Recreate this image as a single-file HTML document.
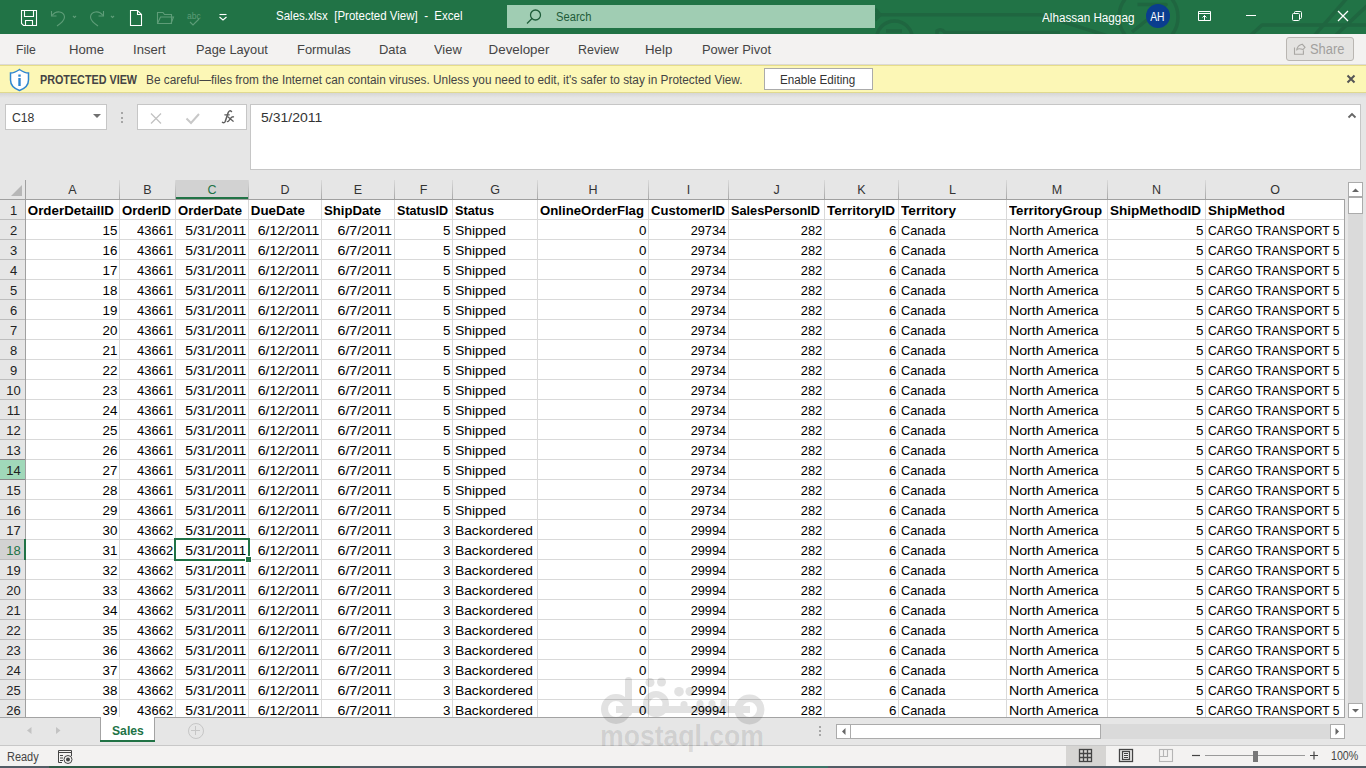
<!DOCTYPE html>
<html><head><meta charset="utf-8"><title>Sales.xlsx - Excel</title>
<style>html,body{margin:0;padding:0;width:1366px;height:768px;overflow:hidden;background:#fff;font-family:'Liberation Sans', sans-serif;}</style>
</head><body>
<div style="position:absolute;left:0px;top:0px;width:1366px;height:34px;background:#217346;z-index:1"></div><svg style="position:absolute;left:0;top:0;z-index:2" width="1366" height="34">
<g stroke="#1f6640" stroke-width="3.5" fill="none" stroke-linejoin="round">
<path d="M873 14.7 L1040 14.7 L1108 36"/>
<path d="M875 9 L880 14.7 L875 20"/>
<circle cx="894.5" cy="39" r="18"/>
<path d="M886 31 H902"/>
<path d="M937 36 V31 Q941 28 945 32.5 L1060 32.5"/>
<circle cx="1148.5" cy="17" r="29.5"/>
<path d="M1137.5 4.6 H1166 L1132 32"/>
<path d="M1250 36 L1262 25 H1370"/>
<path d="M1347 -2 L1314 36"/>
<path d="M1370 3 L1335 36"/>
</g></svg><div style="position:absolute;left:507px;top:5px;width:368px;height:23px;background:#a0cdb3;z-index:3"></div><svg style="position:absolute;left:524px;top:8px;z-index:4" width="20" height="18"><g stroke="#1e5c39" stroke-width="1.3" fill="none"><circle cx="11.5" cy="7" r="5"/><path d="M8 10.5 L3 15.5"/></g></svg><div style="position:absolute;left:1146px;top:4px;width:24px;height:24px;border-radius:50%;background:#0a3d8f;z-index:4"></div><svg style="position:absolute;left:0;top:0;z-index:4" width="260" height="34">
<g fill="none" stroke="#ffffff" stroke-width="1.1">
<path d="M21.5 10.5 H36.5 V25.5 H23.5 L21.5 23.5 Z"/>
<path d="M24.5 10.5 V16.5 H33.5 V10.5"/>
<path d="M25.5 25.5 V20.5 H32.5 V25.5"/>
<path d="M130.5 10.5 H137.5 L141.5 14.5 V25.5 H130.5 Z"/>
<path d="M137.5 10.5 V14.5 H141.5"/>
<path d="M219.5 14.5 H226.5"/>
<path d="M219.5 17 L223 20 L226.5 17"/>
</g>
<g fill="none" stroke="#5e9d78" stroke-width="1.1">
<path d="M51.5 11 V16 H56.5"/><path d="M52 15.5 C56 10 64 11 64.5 17 C64.5 21 60 24 57 26"/>
<path d="M73 16 L74.5 17.5 L76 16"/>
<path d="M103.5 11 V16 H98.5"/><path d="M103 15.5 C99 10 91 11 90.5 17 C90.5 21 95 24 98 26"/>
<path d="M111 16 L112.5 17.5 L114 16"/>
<path d="M157.5 12.5 H163 L164.5 14.5 H171.5 V23.5 H157.5 Z"/><path d="M157.5 23.5 L160.5 17 H173.5 L171 23.5"/>
<path d="M190 22 L193 25 L199 19"/>
</g>
<text x="187" y="19" font-family="Liberation Sans" font-size="8.5" fill="#5e9d78">abc</text>
</svg><svg style="position:absolute;left:1190px;top:0;z-index:4" width="176" height="34">
<g fill="none" stroke="#ffffff" stroke-width="1">
<path d="M8.5 11.5 H20.5 V20.5 H8.5 Z"/><path d="M8.5 13.5 H20.5"/><path d="M14.5 20.5 V15.5"/><path d="M12.5 17.5 L14.5 15.5 L16.5 17.5"/>
<path d="M56 15.5 H66"/>
<rect x="102.5" y="13.5" width="7" height="7" rx="1"/><path d="M104.5 13 V12.5 Q104.5 11.5 105.5 11.5 H110.5 Q111.5 11.5 111.5 12.5 V17.5 Q111.5 18.5 110.5 18.5 H110"/>
<path d="M148 11 L158 21 M158 11 L148 21" stroke-width="1.25"/>
</g></svg><div style="position:absolute;left:0px;top:34px;width:1366px;height:30px;background:#f3f2f1;z-index:1"></div><div style="position:absolute;left:0px;top:64px;width:1366px;height:1px;background:#dcdad6;z-index:2"></div><div style="position:absolute;left:1286px;top:37px;width:66px;height:22px;border:1px solid #b9b6b2;border-radius:3px;background:#e4e3e1;z-index:3"></div><svg style="position:absolute;left:1290px;top:40px;z-index:4" width="20" height="18"><g fill="none" stroke="#a8a6a3" stroke-width="1.1"><path d="M4.5 7.5 V14.3 H13.4 V10.3"/><path d="M6.6 10.5 Q7.5 5 12.2 4.2 L15 7.3 L13 9.6"/><path d="M6.8 9.2 Q9.5 8 13 9.6"/></g></svg><div style="position:absolute;left:0px;top:65px;width:1366px;height:28px;background:#fcf7b6;z-index:1"></div><div style="position:absolute;left:0px;top:65px;width:1366px;height:1px;background:#e6dd8a;z-index:2"></div><div style="position:absolute;left:0px;top:92px;width:1366px;height:1px;background:#e0d98f;z-index:2"></div><div style="position:absolute;left:0px;top:93px;width:1366px;height:5px;background:linear-gradient(#d6d6d6,#e6e6e6);z-index:2"></div><svg style="position:absolute;left:8px;top:67px;z-index:4" width="24" height="26"><path d="M11.5 2.5 C8 5 5 6 2.5 6 V13 C2.5 18 6 21.5 11.5 23.5 C17 21.5 20.5 18 20.5 13 V6 C18 6 15 5 11.5 2.5 Z" fill="#ffffff" stroke="#2f86d0" stroke-width="1.5"/><rect x="10.3" y="11" width="2.4" height="8" fill="#2f86d0"/><rect x="10.3" y="7.5" width="2.4" height="2.2" fill="#2f86d0"/></svg><div style="position:absolute;left:764px;top:68px;width:107px;height:20px;border:1px solid #ababab;background:#ffffff;z-index:3"></div><svg style="position:absolute;left:1344px;top:72px;z-index:4" width="14" height="14"><path d="M3.5 3.5 L10.5 10.5 M10.5 3.5 L3.5 10.5" stroke="#555" stroke-width="2"/></svg><div style="position:absolute;left:0px;top:96px;width:1366px;height:84px;background:#e6e6e6;z-index:1"></div><div style="position:absolute;left:5px;top:104px;width:100px;height:24px;border:1px solid #c6c6c6;background:#fff;z-index:3"></div><svg style="position:absolute;left:90px;top:110px;z-index:4" width="14" height="12"><path d="M3 4 H11 L7 8 Z" fill="#707070"/></svg><div style="position:absolute;left:121px;top:112px;width:2px;height:2px;background:#a6a6a6;z-index:3"></div><div style="position:absolute;left:121px;top:117px;width:2px;height:2px;background:#a6a6a6;z-index:3"></div><div style="position:absolute;left:121px;top:121px;width:2px;height:2px;background:#a6a6a6;z-index:3"></div><div style="position:absolute;left:137px;top:104px;width:108px;height:24px;border:1px solid #c6c6c6;background:#fff;z-index:3"></div><svg style="position:absolute;left:137px;top:104px;z-index:4" width="110" height="26">
<path d="M14 9.5 L24 19.5 M24 9.5 L14 19.5" stroke="#c2c2c2" stroke-width="1.3" fill="none"/>
<path d="M49.5 14.5 L54 19 L62 10" stroke="#c8c8c8" stroke-width="2" fill="none"/>
<g fill="none" stroke="#5f5f5f" stroke-width="1.5" stroke-linecap="round"><path d="M94.5 7.5 Q92.5 5.8 91.2 8.5 L88.2 17.5 Q87.3 19.3 85.5 18.3"/><path d="M87.8 10.8 H92.3" stroke-width="1.2"/><path d="M90.8 12.8 L96.2 17.2 M96.5 12.8 Q95 12.5 93.5 14.5 L91.5 17.2 Q91 17.8 90.3 17.5" stroke-width="1.3"/></g>
</svg><div style="position:absolute;left:250px;top:104px;width:1109px;height:64px;border:1px solid #c6c6c6;background:#fff;z-index:3"></div><svg style="position:absolute;left:1345px;top:110px;z-index:4" width="14" height="10"><path d="M3.5 7.5 L7 4 L10.5 7.5" stroke="#666" stroke-width="1.8" fill="none"/></svg><div style="position:absolute;left:26px;top:200px;width:1318px;height:517px;background:#ffffff;z-index:1"></div><div style="position:absolute;left:0px;top:180px;width:1366px;height:20px;background:#e6e6e6;z-index:1"></div><div style="position:absolute;left:176px;top:180px;width:72px;height:19px;background:#d2d2d2;z-index:2"></div><div style="position:absolute;left:176px;top:197px;width:72px;height:2px;background:#217346;z-index:3"></div><div style="position:absolute;left:0px;top:200px;width:25px;height:517px;background:#e6e6e6;z-index:1"></div><div style="position:absolute;left:0px;top:199px;width:1344px;height:1px;background:#a0a0a0;z-index:2"></div><div style="position:absolute;left:25px;top:180px;width:1px;height:537px;background:#a0a0a0;z-index:2"></div><div style="position:absolute;left:119px;top:180px;width:1px;height:19px;background:linear-gradient(#dadada,#a8a8a8);z-index:2"></div><div style="position:absolute;left:175px;top:180px;width:1px;height:19px;background:linear-gradient(#dadada,#a8a8a8);z-index:2"></div><div style="position:absolute;left:248px;top:180px;width:1px;height:19px;background:linear-gradient(#dadada,#a8a8a8);z-index:2"></div><div style="position:absolute;left:321px;top:180px;width:1px;height:19px;background:linear-gradient(#dadada,#a8a8a8);z-index:2"></div><div style="position:absolute;left:394px;top:180px;width:1px;height:19px;background:linear-gradient(#dadada,#a8a8a8);z-index:2"></div><div style="position:absolute;left:452px;top:180px;width:1px;height:19px;background:linear-gradient(#dadada,#a8a8a8);z-index:2"></div><div style="position:absolute;left:537px;top:180px;width:1px;height:19px;background:linear-gradient(#dadada,#a8a8a8);z-index:2"></div><div style="position:absolute;left:648px;top:180px;width:1px;height:19px;background:linear-gradient(#dadada,#a8a8a8);z-index:2"></div><div style="position:absolute;left:728px;top:180px;width:1px;height:19px;background:linear-gradient(#dadada,#a8a8a8);z-index:2"></div><div style="position:absolute;left:824px;top:180px;width:1px;height:19px;background:linear-gradient(#dadada,#a8a8a8);z-index:2"></div><div style="position:absolute;left:898px;top:180px;width:1px;height:19px;background:linear-gradient(#dadada,#a8a8a8);z-index:2"></div><div style="position:absolute;left:1006px;top:180px;width:1px;height:19px;background:linear-gradient(#dadada,#a8a8a8);z-index:2"></div><div style="position:absolute;left:1107px;top:180px;width:1px;height:19px;background:linear-gradient(#dadada,#a8a8a8);z-index:2"></div><div style="position:absolute;left:1205px;top:180px;width:1px;height:19px;background:linear-gradient(#dadada,#a8a8a8);z-index:2"></div><div style="position:absolute;left:119px;top:200px;width:1px;height:517px;background:#d9d9d9;z-index:2"></div><div style="position:absolute;left:175px;top:200px;width:1px;height:517px;background:#d9d9d9;z-index:2"></div><div style="position:absolute;left:248px;top:200px;width:1px;height:517px;background:#d9d9d9;z-index:2"></div><div style="position:absolute;left:321px;top:200px;width:1px;height:517px;background:#d9d9d9;z-index:2"></div><div style="position:absolute;left:394px;top:200px;width:1px;height:517px;background:#d9d9d9;z-index:2"></div><div style="position:absolute;left:452px;top:200px;width:1px;height:517px;background:#d9d9d9;z-index:2"></div><div style="position:absolute;left:537px;top:200px;width:1px;height:517px;background:#d9d9d9;z-index:2"></div><div style="position:absolute;left:648px;top:200px;width:1px;height:517px;background:#d9d9d9;z-index:2"></div><div style="position:absolute;left:728px;top:200px;width:1px;height:517px;background:#d9d9d9;z-index:2"></div><div style="position:absolute;left:824px;top:200px;width:1px;height:517px;background:#d9d9d9;z-index:2"></div><div style="position:absolute;left:898px;top:200px;width:1px;height:517px;background:#d9d9d9;z-index:2"></div><div style="position:absolute;left:1006px;top:200px;width:1px;height:517px;background:#d9d9d9;z-index:2"></div><div style="position:absolute;left:1107px;top:200px;width:1px;height:517px;background:#d9d9d9;z-index:2"></div><div style="position:absolute;left:1205px;top:200px;width:1px;height:517px;background:#d9d9d9;z-index:2"></div><div style="position:absolute;left:26px;top:219px;width:1318px;height:1px;background:#d9d9d9;z-index:2"></div><div style="position:absolute;left:0px;top:219px;width:25px;height:1px;background:#bdbdbd;z-index:2"></div><div style="position:absolute;left:26px;top:239px;width:1318px;height:1px;background:#d9d9d9;z-index:2"></div><div style="position:absolute;left:0px;top:239px;width:25px;height:1px;background:#bdbdbd;z-index:2"></div><div style="position:absolute;left:26px;top:259px;width:1318px;height:1px;background:#d9d9d9;z-index:2"></div><div style="position:absolute;left:0px;top:259px;width:25px;height:1px;background:#bdbdbd;z-index:2"></div><div style="position:absolute;left:26px;top:279px;width:1318px;height:1px;background:#d9d9d9;z-index:2"></div><div style="position:absolute;left:0px;top:279px;width:25px;height:1px;background:#bdbdbd;z-index:2"></div><div style="position:absolute;left:26px;top:299px;width:1318px;height:1px;background:#d9d9d9;z-index:2"></div><div style="position:absolute;left:0px;top:299px;width:25px;height:1px;background:#bdbdbd;z-index:2"></div><div style="position:absolute;left:26px;top:319px;width:1318px;height:1px;background:#d9d9d9;z-index:2"></div><div style="position:absolute;left:0px;top:319px;width:25px;height:1px;background:#bdbdbd;z-index:2"></div><div style="position:absolute;left:26px;top:339px;width:1318px;height:1px;background:#d9d9d9;z-index:2"></div><div style="position:absolute;left:0px;top:339px;width:25px;height:1px;background:#bdbdbd;z-index:2"></div><div style="position:absolute;left:26px;top:359px;width:1318px;height:1px;background:#d9d9d9;z-index:2"></div><div style="position:absolute;left:0px;top:359px;width:25px;height:1px;background:#bdbdbd;z-index:2"></div><div style="position:absolute;left:26px;top:379px;width:1318px;height:1px;background:#d9d9d9;z-index:2"></div><div style="position:absolute;left:0px;top:379px;width:25px;height:1px;background:#bdbdbd;z-index:2"></div><div style="position:absolute;left:26px;top:399px;width:1318px;height:1px;background:#d9d9d9;z-index:2"></div><div style="position:absolute;left:0px;top:399px;width:25px;height:1px;background:#bdbdbd;z-index:2"></div><div style="position:absolute;left:26px;top:419px;width:1318px;height:1px;background:#d9d9d9;z-index:2"></div><div style="position:absolute;left:0px;top:419px;width:25px;height:1px;background:#bdbdbd;z-index:2"></div><div style="position:absolute;left:26px;top:439px;width:1318px;height:1px;background:#d9d9d9;z-index:2"></div><div style="position:absolute;left:0px;top:439px;width:25px;height:1px;background:#bdbdbd;z-index:2"></div><div style="position:absolute;left:26px;top:459px;width:1318px;height:1px;background:#d9d9d9;z-index:2"></div><div style="position:absolute;left:0px;top:459px;width:25px;height:1px;background:#bdbdbd;z-index:2"></div><div style="position:absolute;left:26px;top:479px;width:1318px;height:1px;background:#d9d9d9;z-index:2"></div><div style="position:absolute;left:0px;top:479px;width:25px;height:1px;background:#bdbdbd;z-index:2"></div><div style="position:absolute;left:26px;top:499px;width:1318px;height:1px;background:#d9d9d9;z-index:2"></div><div style="position:absolute;left:0px;top:499px;width:25px;height:1px;background:#bdbdbd;z-index:2"></div><div style="position:absolute;left:26px;top:519px;width:1318px;height:1px;background:#d9d9d9;z-index:2"></div><div style="position:absolute;left:0px;top:519px;width:25px;height:1px;background:#bdbdbd;z-index:2"></div><div style="position:absolute;left:26px;top:539px;width:1318px;height:1px;background:#d9d9d9;z-index:2"></div><div style="position:absolute;left:0px;top:539px;width:25px;height:1px;background:#bdbdbd;z-index:2"></div><div style="position:absolute;left:26px;top:559px;width:1318px;height:1px;background:#d9d9d9;z-index:2"></div><div style="position:absolute;left:0px;top:559px;width:25px;height:1px;background:#bdbdbd;z-index:2"></div><div style="position:absolute;left:26px;top:579px;width:1318px;height:1px;background:#d9d9d9;z-index:2"></div><div style="position:absolute;left:0px;top:579px;width:25px;height:1px;background:#bdbdbd;z-index:2"></div><div style="position:absolute;left:26px;top:599px;width:1318px;height:1px;background:#d9d9d9;z-index:2"></div><div style="position:absolute;left:0px;top:599px;width:25px;height:1px;background:#bdbdbd;z-index:2"></div><div style="position:absolute;left:26px;top:619px;width:1318px;height:1px;background:#d9d9d9;z-index:2"></div><div style="position:absolute;left:0px;top:619px;width:25px;height:1px;background:#bdbdbd;z-index:2"></div><div style="position:absolute;left:26px;top:639px;width:1318px;height:1px;background:#d9d9d9;z-index:2"></div><div style="position:absolute;left:0px;top:639px;width:25px;height:1px;background:#bdbdbd;z-index:2"></div><div style="position:absolute;left:26px;top:659px;width:1318px;height:1px;background:#d9d9d9;z-index:2"></div><div style="position:absolute;left:0px;top:659px;width:25px;height:1px;background:#bdbdbd;z-index:2"></div><div style="position:absolute;left:26px;top:679px;width:1318px;height:1px;background:#d9d9d9;z-index:2"></div><div style="position:absolute;left:0px;top:679px;width:25px;height:1px;background:#bdbdbd;z-index:2"></div><div style="position:absolute;left:26px;top:699px;width:1318px;height:1px;background:#d9d9d9;z-index:2"></div><div style="position:absolute;left:0px;top:699px;width:25px;height:1px;background:#bdbdbd;z-index:2"></div><div style="position:absolute;left:1344px;top:199px;width:1px;height:519px;background:#a3a3a3;z-index:3"></div><div style="position:absolute;left:0px;top:717px;width:1345px;height:1px;background:#a3a3a3;z-index:3"></div><svg style="position:absolute;left:0;top:180px;z-index:3" width="25" height="19"><path d="M22 5 V16 H11 Z" fill="#b7b7b7"/></svg><div style="position:absolute;left:0px;top:460px;width:25px;height:19px;background:#a0d8b9;z-index:3"></div><div style="position:absolute;left:0px;top:459px;width:25px;height:1px;background:#8a8a8a;z-index:3"></div><div style="position:absolute;left:0px;top:479px;width:25px;height:1px;background:#8a8a8a;z-index:3"></div><div style="position:absolute;left:0px;top:540px;width:24px;height:19px;background:#d2d2d2;z-index:3"></div><div style="position:absolute;left:24px;top:539px;width:2px;height:21px;background:#217346;z-index:4"></div><div style="position:absolute;left:174px;top:538px;width:72px;height:19px;border:2px solid #217346;z-index:6"></div><div style="position:absolute;left:245px;top:556px;width:5px;height:5px;background:#217346;border:1px solid #fff;z-index:7"></div><div style="position:absolute;left:1345px;top:180px;width:21px;height:538px;background:#e6e6e6;z-index:1"></div><div style="position:absolute;left:1348px;top:197px;width:15px;height:520px;background:#dadada;z-index:2"></div><div style="position:absolute;left:1348px;top:182px;width:13px;height:13px;border:1px solid #ababab;background:#fff;z-index:3"></div><div style="position:absolute;left:1348px;top:197px;width:13px;height:15px;border:1px solid #ababab;background:#fff;z-index:3"></div><div style="position:absolute;left:1348px;top:703px;width:13px;height:13px;border:1px solid #ababab;background:#fff;z-index:3"></div><svg style="position:absolute;left:1348px;top:182px;z-index:4" width="15" height="15"><path d="M4 10 L7.5 6.5 L11 10 Z" fill="#666"/></svg><svg style="position:absolute;left:1348px;top:703px;z-index:4" width="15" height="15"><path d="M4 6 L7.5 9.5 L11 6 Z" fill="#666"/></svg><div style="position:absolute;left:0px;top:718px;width:1366px;height:27px;background:#e6e6e6;z-index:1"></div><div style="position:absolute;left:0px;top:745px;width:1366px;height:1px;background:#c8c8c8;z-index:2"></div><div style="position:absolute;left:100px;top:717px;width:53px;height:23px;border-left:1px solid #a3a3a3;border-right:1px solid #a3a3a3;background:#fff;z-index:4"></div><div style="position:absolute;left:100px;top:740px;width:55px;height:2px;background:#217346;z-index:5"></div><svg style="position:absolute;left:0px;top:718px;z-index:4" width="70" height="24"><path d="M31.5 9 L27 12.5 L31.5 16 Z" fill="#c3c3c3"/><path d="M56 9 L60.5 12.5 L56 16 Z" fill="#c3c3c3"/></svg><div style="position:absolute;left:188px;top:723px;width:14px;height:14px;border:1px solid #c6c6c6;border-radius:50%;z-index:4"></div><div style="position:absolute;left:191px;top:730px;width:9px;height:1.4px;background:#c6c6c6;z-index:5"></div><div style="position:absolute;left:195px;top:726px;width:1.4px;height:9px;background:#c6c6c6;z-index:5"></div><div style="position:absolute;left:819px;top:726px;width:2px;height:2px;background:#a6a6a6;z-index:3"></div><div style="position:absolute;left:819px;top:730px;width:2px;height:2px;background:#a6a6a6;z-index:3"></div><div style="position:absolute;left:819px;top:734px;width:2px;height:2px;background:#a6a6a6;z-index:3"></div><div style="position:absolute;left:851px;top:724px;width:480px;height:15px;background:#dadada;z-index:2"></div><div style="position:absolute;left:836px;top:724px;width:13px;height:13px;border:1px solid #ababab;background:#fff;z-index:3"></div><div style="position:absolute;left:850px;top:724px;width:249px;height:13px;border:1px solid #ababab;background:#fff;z-index:3"></div><div style="position:absolute;left:1330px;top:724px;width:13px;height:13px;border:1px solid #ababab;background:#fff;z-index:3"></div><svg style="position:absolute;left:836px;top:724px;z-index:4" width="15" height="15"><path d="M9.5 4 L6 7.5 L9.5 11 Z" fill="#666"/></svg><svg style="position:absolute;left:1330px;top:724px;z-index:4" width="15" height="15"><path d="M5.5 4 L9 7.5 L5.5 11 Z" fill="#666"/></svg><div style="position:absolute;left:0px;top:746px;width:1366px;height:20px;background:#f3f2f1;z-index:1"></div><svg style="position:absolute;left:56px;top:748px;z-index:4" width="20" height="17"><g fill="none" stroke="#444" stroke-width="1"><path d="M2.5 2.5 H15.5 V8"/><path d="M2.5 2.5 V14.5 H6"/><path d="M2.5 4.5 H15.5"/></g><g fill="#444"><rect x="4" y="7" width="3" height="1"/><rect x="4" y="9.5" width="3" height="1"/><rect x="4" y="12" width="3" height="1"/></g><circle cx="12" cy="11.5" r="4" fill="none" stroke="#444" stroke-width="1"/><circle cx="12" cy="11.5" r="2" fill="#444"/></svg><div style="position:absolute;left:1066px;top:746px;width:40px;height:20px;background:#d6d5d3;z-index:2"></div><svg style="position:absolute;left:1066px;top:746px;z-index:4" width="300" height="20">
<g fill="none" stroke="#444" stroke-width="1.3"><rect x="13.5" y="3.5" width="12" height="12"/><path d="M17.5 3.5 V15.5 M21.5 3.5 V15.5 M13.5 7.5 H25.5 M13.5 11.5 H25.5"/></g>
<g fill="none" stroke="#444" stroke-width="1.3"><rect x="53.5" y="3.5" width="13" height="12"/><rect x="56.5" y="5.5" width="7" height="8"/><path d="M58 7.5 H62 M58 9.5 H62 M58 11.5 H62" stroke-width="1"/></g>
<g fill="none" stroke="#b5b5b5" stroke-width="1.1"><rect x="93.5" y="3.5" width="13" height="12"/><path d="M97.5 3.5 V10.5 H101.5 V3.5 M93.5 10.5 H101.5"/></g>
<path d="M126 9.5 H134" stroke="#444" stroke-width="1.2"/>
<path d="M139 9.5 H239" stroke="#9a9a9a" stroke-width="1.2"/>
<rect x="187" y="5" width="5" height="11" fill="#777"/>
<path d="M244 9.5 H252 M248 5.5 V13.5" stroke="#444" stroke-width="1.2"/>
</g></svg><div style="position:absolute;left:0px;top:766px;width:1366px;height:2px;background:#525d66;z-index:2"></div><div style="position:absolute;left:49px;top:766px;width:291px;height:2px;background:#2f5b47;z-index:3"></div><div style="position:absolute;left:780px;top:766px;width:48px;height:2px;background:#3b7468;z-index:3"></div><svg style="position:absolute;left:590px;top:670px;z-index:8" width="190" height="70"><g opacity="0.11">
<g fill="none" stroke="#000"><circle cx="26" cy="39" r="11.5" stroke-width="7"/><circle cx="66" cy="34" r="9.75" stroke-width="6.5"/><circle cx="159.5" cy="39.5" r="11.25" stroke-width="7.5"/></g>
<g fill="#000"><rect x="35" y="7" width="7" height="39" rx="3.5"/><rect x="26" y="36" width="134" height="7"/>
<circle cx="60" cy="12.5" r="4.5"/><circle cx="71.5" cy="12" r="4.5"/><circle cx="89" cy="21.7" r="4.8"/><circle cx="100" cy="21.5" r="4.5"/>
<rect x="90.5" y="31" width="7" height="12" rx="3.5"/><rect x="106.5" y="30" width="7" height="13" rx="3.5"/><rect x="118.5" y="30" width="7" height="13" rx="3.5"/><rect x="130.5" y="29" width="7" height="14" rx="3.5"/>
</g></g></svg>
<div style="position:absolute;top:11.22px;font:normal 12.5px 'Liberation Sans', sans-serif;line-height:12.5px;color:#1e5c39;white-space:pre;z-index:5;left:556.40px;transform-origin:0 50%;transform:scaleX(0.8937);">Search</div><div style="position:absolute;top:9.92px;font:normal 12.5px 'Liberation Sans', sans-serif;line-height:12.5px;color:#ffffff;white-space:pre;z-index:5;left:276.40px;transform-origin:0 50%;transform:scaleX(0.9204);">Sales.xlsx  [Protected View]  -  Excel</div><div style="position:absolute;top:11.72px;font:normal 12.5px 'Liberation Sans', sans-serif;line-height:12.5px;color:#ffffff;white-space:pre;z-index:5;left:1042.40px;transform-origin:0 50%;transform:scaleX(0.9363);">Alhassan Haggag</div><div style="position:absolute;top:11.04px;font:normal 12px 'Liberation Sans', sans-serif;line-height:12px;color:#ffffff;white-space:pre;z-index:5;left:1149.26px;transform-origin:50% 50%;transform:scaleX(0.8577);">AH</div><div style="position:absolute;top:42.92px;font:normal 13.33px 'Liberation Sans', sans-serif;line-height:13.33px;color:#444444;white-space:pre;z-index:5;left:16.40px;transform-origin:0 50%;transform:scaleX(0.9169);">File</div><div style="position:absolute;top:42.92px;font:normal 13.33px 'Liberation Sans', sans-serif;line-height:13.33px;color:#444444;white-space:pre;z-index:5;left:68.80px;transform-origin:0 50%;transform:scaleX(0.9842);">Home</div><div style="position:absolute;top:42.92px;font:normal 13.33px 'Liberation Sans', sans-serif;line-height:13.33px;color:#444444;white-space:pre;z-index:5;left:132.60px;transform-origin:0 50%;transform:scaleX(0.9807);">Insert</div><div style="position:absolute;top:42.92px;font:normal 13.33px 'Liberation Sans', sans-serif;line-height:13.33px;color:#444444;white-space:pre;z-index:5;left:195.60px;transform-origin:0 50%;transform:scaleX(0.9591);">Page Layout</div><div style="position:absolute;top:42.92px;font:normal 13.33px 'Liberation Sans', sans-serif;line-height:13.33px;color:#444444;white-space:pre;z-index:5;left:296.60px;transform-origin:0 50%;transform:scaleX(0.9686);">Formulas</div><div style="position:absolute;top:42.92px;font:normal 13.33px 'Liberation Sans', sans-serif;line-height:13.33px;color:#444444;white-space:pre;z-index:5;left:378.70px;transform-origin:0 50%;transform:scaleX(0.9731);">Data</div><div style="position:absolute;top:42.92px;font:normal 13.33px 'Liberation Sans', sans-serif;line-height:13.33px;color:#444444;white-space:pre;z-index:5;left:433.60px;transform-origin:0 50%;transform:scaleX(0.9666);">View</div><div style="position:absolute;top:42.92px;font:normal 13.33px 'Liberation Sans', sans-serif;line-height:13.33px;color:#444444;white-space:pre;z-index:5;left:488.60px;transform-origin:0 50%;">Developer</div><div style="position:absolute;top:42.92px;font:normal 13.33px 'Liberation Sans', sans-serif;line-height:13.33px;color:#444444;white-space:pre;z-index:5;left:577.60px;transform-origin:0 50%;transform:scaleX(0.9336);">Review</div><div style="position:absolute;top:42.92px;font:normal 13.33px 'Liberation Sans', sans-serif;line-height:13.33px;color:#444444;white-space:pre;z-index:5;left:645.30px;transform-origin:0 50%;transform:scaleX(0.9956);">Help</div><div style="position:absolute;top:42.92px;font:normal 13.33px 'Liberation Sans', sans-serif;line-height:13.33px;color:#444444;white-space:pre;z-index:5;left:702.40px;transform-origin:0 50%;transform:scaleX(0.9701);">Power Pivot</div><div style="position:absolute;top:42.35px;font:normal 14px 'Liberation Sans', sans-serif;line-height:14px;color:#a19f9d;white-space:pre;z-index:5;left:1309.80px;transform-origin:0 50%;transform:scaleX(0.9208);">Share</div><div style="position:absolute;top:73.62px;font:bold 12.5px 'Liberation Sans', sans-serif;line-height:12.5px;color:#444444;white-space:pre;z-index:5;left:40.00px;transform-origin:0 50%;transform:scaleX(0.8621);">PROTECTED VIEW</div><div style="position:absolute;top:73.62px;font:normal 12.5px 'Liberation Sans', sans-serif;line-height:12.5px;color:#444444;white-space:pre;z-index:5;left:146.40px;transform-origin:0 50%;transform:scaleX(0.9454);">Be careful—files from the Internet can contain viruses. Unless you need to edit, it&#x27;s safer to stay in Protected View.</div><div style="position:absolute;top:73.62px;font:normal 12.5px 'Liberation Sans', sans-serif;line-height:12.5px;color:#333333;white-space:pre;z-index:5;left:779.70px;transform-origin:0 50%;transform:scaleX(0.9327);">Enable Editing</div><div style="position:absolute;top:111.00px;font:normal 13px 'Liberation Sans', sans-serif;line-height:13px;color:#333333;white-space:pre;z-index:5;left:11.80px;transform-origin:0 50%;transform:scaleX(0.9388);">C18</div><div style="position:absolute;top:110.70px;font:normal 13.35px 'Liberation Sans', sans-serif;line-height:13.35px;color:#333333;white-space:pre;z-index:5;left:261.10px;transform-origin:0 50%;transform:scaleX(1.0501);">5/31/2011</div><div style="position:absolute;top:184.02px;font:normal 12.5px 'Liberation Sans', sans-serif;line-height:12.5px;color:#333333;white-space:pre;z-index:5;left:68.33px;transform-origin:50% 50%;">A</div><div style="position:absolute;top:184.02px;font:normal 12.5px 'Liberation Sans', sans-serif;line-height:12.5px;color:#333333;white-space:pre;z-index:5;left:143.33px;transform-origin:50% 50%;">B</div><div style="position:absolute;top:184.02px;font:normal 12.5px 'Liberation Sans', sans-serif;line-height:12.5px;color:#217346;white-space:pre;z-index:5;left:207.48px;transform-origin:50% 50%;">C</div><div style="position:absolute;top:184.02px;font:normal 12.5px 'Liberation Sans', sans-serif;line-height:12.5px;color:#333333;white-space:pre;z-index:5;left:280.48px;transform-origin:50% 50%;">D</div><div style="position:absolute;top:184.02px;font:normal 12.5px 'Liberation Sans', sans-serif;line-height:12.5px;color:#333333;white-space:pre;z-index:5;left:353.83px;transform-origin:50% 50%;">E</div><div style="position:absolute;top:184.02px;font:normal 12.5px 'Liberation Sans', sans-serif;line-height:12.5px;color:#333333;white-space:pre;z-index:5;left:419.68px;transform-origin:50% 50%;">F</div><div style="position:absolute;top:184.02px;font:normal 12.5px 'Liberation Sans', sans-serif;line-height:12.5px;color:#333333;white-space:pre;z-index:5;left:490.13px;transform-origin:50% 50%;">G</div><div style="position:absolute;top:184.02px;font:normal 12.5px 'Liberation Sans', sans-serif;line-height:12.5px;color:#333333;white-space:pre;z-index:5;left:588.48px;transform-origin:50% 50%;">H</div><div style="position:absolute;top:184.02px;font:normal 12.5px 'Liberation Sans', sans-serif;line-height:12.5px;color:#333333;white-space:pre;z-index:5;left:686.76px;transform-origin:50% 50%;">I</div><div style="position:absolute;top:184.02px;font:normal 12.5px 'Liberation Sans', sans-serif;line-height:12.5px;color:#333333;white-space:pre;z-index:5;left:773.38px;transform-origin:50% 50%;">J</div><div style="position:absolute;top:184.02px;font:normal 12.5px 'Liberation Sans', sans-serif;line-height:12.5px;color:#333333;white-space:pre;z-index:5;left:857.33px;transform-origin:50% 50%;">K</div><div style="position:absolute;top:184.02px;font:normal 12.5px 'Liberation Sans', sans-serif;line-height:12.5px;color:#333333;white-space:pre;z-index:5;left:949.02px;transform-origin:50% 50%;">L</div><div style="position:absolute;top:184.02px;font:normal 12.5px 'Liberation Sans', sans-serif;line-height:12.5px;color:#333333;white-space:pre;z-index:5;left:1051.79px;transform-origin:50% 50%;">M</div><div style="position:absolute;top:184.02px;font:normal 12.5px 'Liberation Sans', sans-serif;line-height:12.5px;color:#333333;white-space:pre;z-index:5;left:1151.98px;transform-origin:50% 50%;">N</div><div style="position:absolute;top:184.02px;font:normal 12.5px 'Liberation Sans', sans-serif;line-height:12.5px;color:#333333;white-space:pre;z-index:5;left:1270.13px;transform-origin:50% 50%;">O</div><div style="position:absolute;top:204.00px;font:normal 13px 'Liberation Sans', sans-serif;line-height:13px;color:#222222;white-space:pre;z-index:5;left:9.88px;transform-origin:50% 50%;">1</div><div style="position:absolute;top:224.00px;font:normal 13px 'Liberation Sans', sans-serif;line-height:13px;color:#222222;white-space:pre;z-index:5;left:9.88px;transform-origin:50% 50%;">2</div><div style="position:absolute;top:244.00px;font:normal 13px 'Liberation Sans', sans-serif;line-height:13px;color:#222222;white-space:pre;z-index:5;left:9.88px;transform-origin:50% 50%;">3</div><div style="position:absolute;top:264.00px;font:normal 13px 'Liberation Sans', sans-serif;line-height:13px;color:#222222;white-space:pre;z-index:5;left:9.88px;transform-origin:50% 50%;">4</div><div style="position:absolute;top:284.00px;font:normal 13px 'Liberation Sans', sans-serif;line-height:13px;color:#222222;white-space:pre;z-index:5;left:9.88px;transform-origin:50% 50%;">5</div><div style="position:absolute;top:304.00px;font:normal 13px 'Liberation Sans', sans-serif;line-height:13px;color:#222222;white-space:pre;z-index:5;left:9.88px;transform-origin:50% 50%;">6</div><div style="position:absolute;top:324.00px;font:normal 13px 'Liberation Sans', sans-serif;line-height:13px;color:#222222;white-space:pre;z-index:5;left:9.88px;transform-origin:50% 50%;">7</div><div style="position:absolute;top:344.00px;font:normal 13px 'Liberation Sans', sans-serif;line-height:13px;color:#222222;white-space:pre;z-index:5;left:9.88px;transform-origin:50% 50%;">8</div><div style="position:absolute;top:364.00px;font:normal 13px 'Liberation Sans', sans-serif;line-height:13px;color:#222222;white-space:pre;z-index:5;left:9.88px;transform-origin:50% 50%;">9</div><div style="position:absolute;top:384.00px;font:normal 13px 'Liberation Sans', sans-serif;line-height:13px;color:#222222;white-space:pre;z-index:5;left:6.27px;transform-origin:50% 50%;">10</div><div style="position:absolute;top:404.00px;font:normal 13px 'Liberation Sans', sans-serif;line-height:13px;color:#222222;white-space:pre;z-index:5;left:6.75px;transform-origin:50% 50%;">11</div><div style="position:absolute;top:424.00px;font:normal 13px 'Liberation Sans', sans-serif;line-height:13px;color:#222222;white-space:pre;z-index:5;left:6.27px;transform-origin:50% 50%;">12</div><div style="position:absolute;top:444.00px;font:normal 13px 'Liberation Sans', sans-serif;line-height:13px;color:#222222;white-space:pre;z-index:5;left:6.27px;transform-origin:50% 50%;">13</div><div style="position:absolute;top:464.00px;font:normal 13px 'Liberation Sans', sans-serif;line-height:13px;color:#222222;white-space:pre;z-index:5;left:6.27px;transform-origin:50% 50%;">14</div><div style="position:absolute;top:484.00px;font:normal 13px 'Liberation Sans', sans-serif;line-height:13px;color:#222222;white-space:pre;z-index:5;left:6.27px;transform-origin:50% 50%;">15</div><div style="position:absolute;top:504.00px;font:normal 13px 'Liberation Sans', sans-serif;line-height:13px;color:#222222;white-space:pre;z-index:5;left:6.27px;transform-origin:50% 50%;">16</div><div style="position:absolute;top:524.00px;font:normal 13px 'Liberation Sans', sans-serif;line-height:13px;color:#222222;white-space:pre;z-index:5;left:6.27px;transform-origin:50% 50%;">17</div><div style="position:absolute;top:544.00px;font:normal 13px 'Liberation Sans', sans-serif;line-height:13px;color:#217346;white-space:pre;z-index:5;left:6.27px;transform-origin:50% 50%;">18</div><div style="position:absolute;top:564.00px;font:normal 13px 'Liberation Sans', sans-serif;line-height:13px;color:#222222;white-space:pre;z-index:5;left:6.27px;transform-origin:50% 50%;">19</div><div style="position:absolute;top:584.00px;font:normal 13px 'Liberation Sans', sans-serif;line-height:13px;color:#222222;white-space:pre;z-index:5;left:6.27px;transform-origin:50% 50%;">20</div><div style="position:absolute;top:604.00px;font:normal 13px 'Liberation Sans', sans-serif;line-height:13px;color:#222222;white-space:pre;z-index:5;left:6.27px;transform-origin:50% 50%;">21</div><div style="position:absolute;top:624.00px;font:normal 13px 'Liberation Sans', sans-serif;line-height:13px;color:#222222;white-space:pre;z-index:5;left:6.27px;transform-origin:50% 50%;">22</div><div style="position:absolute;top:644.00px;font:normal 13px 'Liberation Sans', sans-serif;line-height:13px;color:#222222;white-space:pre;z-index:5;left:6.27px;transform-origin:50% 50%;">23</div><div style="position:absolute;top:664.00px;font:normal 13px 'Liberation Sans', sans-serif;line-height:13px;color:#222222;white-space:pre;z-index:5;left:6.27px;transform-origin:50% 50%;">24</div><div style="position:absolute;top:684.00px;font:normal 13px 'Liberation Sans', sans-serif;line-height:13px;color:#222222;white-space:pre;z-index:5;left:6.27px;transform-origin:50% 50%;">25</div><div style="position:absolute;top:704.00px;font:normal 13px 'Liberation Sans', sans-serif;line-height:13px;color:#222222;white-space:pre;z-index:5;left:6.27px;transform-origin:50% 50%;">26</div><div style="position:absolute;top:203.70px;font:bold 13.35px 'Liberation Sans', sans-serif;line-height:13.35px;color:#000;white-space:pre;z-index:5;left:27.80px;transform-origin:0 50%;">OrderDetailID</div><div style="position:absolute;top:203.70px;font:bold 13.35px 'Liberation Sans', sans-serif;line-height:13.35px;color:#000;white-space:pre;z-index:5;left:121.80px;transform-origin:0 50%;transform:scaleX(0.9862);">OrderID</div><div style="position:absolute;top:203.70px;font:bold 13.35px 'Liberation Sans', sans-serif;line-height:13.35px;color:#000;white-space:pre;z-index:5;left:177.80px;transform-origin:0 50%;transform:scaleX(0.9806);">OrderDate</div><div style="position:absolute;top:203.70px;font:bold 13.35px 'Liberation Sans', sans-serif;line-height:13.35px;color:#000;white-space:pre;z-index:5;left:250.80px;transform-origin:0 50%;">DueDate</div><div style="position:absolute;top:203.70px;font:bold 13.35px 'Liberation Sans', sans-serif;line-height:13.35px;color:#000;white-space:pre;z-index:5;left:323.80px;transform-origin:0 50%;transform:scaleX(0.9854);">ShipDate</div><div style="position:absolute;top:203.70px;font:bold 13.35px 'Liberation Sans', sans-serif;line-height:13.35px;color:#000;white-space:pre;z-index:5;left:396.80px;transform-origin:0 50%;transform:scaleX(0.9423);">StatusID</div><div style="position:absolute;top:203.70px;font:bold 13.35px 'Liberation Sans', sans-serif;line-height:13.35px;color:#000;white-space:pre;z-index:5;left:454.80px;transform-origin:0 50%;transform:scaleX(0.9563);">Status</div><div style="position:absolute;top:203.70px;font:bold 13.35px 'Liberation Sans', sans-serif;line-height:13.35px;color:#000;white-space:pre;z-index:5;left:539.80px;transform-origin:0 50%;transform:scaleX(0.9877);">OnlineOrderFlag</div><div style="position:absolute;top:203.70px;font:bold 13.35px 'Liberation Sans', sans-serif;line-height:13.35px;color:#000;white-space:pre;z-index:5;left:650.80px;transform-origin:0 50%;transform:scaleX(0.9783);">CustomerID</div><div style="position:absolute;top:203.70px;font:bold 13.35px 'Liberation Sans', sans-serif;line-height:13.35px;color:#000;white-space:pre;z-index:5;left:730.80px;transform-origin:0 50%;transform:scaleX(0.9523);">SalesPersonID</div><div style="position:absolute;top:203.70px;font:bold 13.35px 'Liberation Sans', sans-serif;line-height:13.35px;color:#000;white-space:pre;z-index:5;left:826.80px;transform-origin:0 50%;transform:scaleX(1.0114);">TerritoryID</div><div style="position:absolute;top:203.70px;font:bold 13.35px 'Liberation Sans', sans-serif;line-height:13.35px;color:#000;white-space:pre;z-index:5;left:900.80px;transform-origin:0 50%;transform:scaleX(1.0206);">Territory</div><div style="position:absolute;top:203.70px;font:bold 13.35px 'Liberation Sans', sans-serif;line-height:13.35px;color:#000;white-space:pre;z-index:5;left:1008.80px;transform-origin:0 50%;transform:scaleX(0.9902);">TerritoryGroup</div><div style="position:absolute;top:203.70px;font:bold 13.35px 'Liberation Sans', sans-serif;line-height:13.35px;color:#000;white-space:pre;z-index:5;left:1109.80px;transform-origin:0 50%;transform:scaleX(1.0146);">ShipMethodID</div><div style="position:absolute;top:203.70px;font:bold 13.35px 'Liberation Sans', sans-serif;line-height:13.35px;color:#000;white-space:pre;z-index:5;left:1207.80px;transform-origin:0 50%;transform:scaleX(1.0086);">ShipMethod</div><div style="position:absolute;top:223.70px;font:normal 13.35px 'Liberation Sans', sans-serif;line-height:13.35px;color:#000;white-space:pre;z-index:5;left:102.56px;transform-origin:100% 50%;">15</div><div style="position:absolute;top:223.70px;font:normal 13.35px 'Liberation Sans', sans-serif;line-height:13.35px;color:#000;white-space:pre;z-index:5;left:136.29px;transform-origin:100% 50%;transform:scaleX(0.9701);">43661</div><div style="position:absolute;top:223.70px;font:normal 13.35px 'Liberation Sans', sans-serif;line-height:13.35px;color:#000;white-space:pre;z-index:5;left:188.03px;transform-origin:100% 50%;transform:scaleX(1.0450);">5/31/2011</div><div style="position:absolute;top:223.70px;font:normal 13.35px 'Liberation Sans', sans-serif;line-height:13.35px;color:#000;white-space:pre;z-index:5;left:261.03px;transform-origin:100% 50%;transform:scaleX(1.0552);">6/12/2011</div><div style="position:absolute;top:223.70px;font:normal 13.35px 'Liberation Sans', sans-serif;line-height:13.35px;color:#000;white-space:pre;z-index:5;left:341.45px;transform-origin:100% 50%;transform:scaleX(1.0696);">6/7/2011</div><div style="position:absolute;top:223.70px;font:normal 13.35px 'Liberation Sans', sans-serif;line-height:13.35px;color:#000;white-space:pre;z-index:5;left:442.98px;transform-origin:100% 50%;">5</div><div style="position:absolute;top:223.70px;font:normal 13.35px 'Liberation Sans', sans-serif;line-height:13.35px;color:#000;white-space:pre;z-index:5;left:454.80px;transform-origin:0 50%;transform:scaleX(1.0411);">Shipped</div><div style="position:absolute;top:223.70px;font:normal 13.35px 'Liberation Sans', sans-serif;line-height:13.35px;color:#000;white-space:pre;z-index:5;left:638.98px;transform-origin:100% 50%;">0</div><div style="position:absolute;top:223.70px;font:normal 13.35px 'Liberation Sans', sans-serif;line-height:13.35px;color:#000;white-space:pre;z-index:5;left:689.29px;transform-origin:100% 50%;transform:scaleX(0.9539);">29734</div><div style="position:absolute;top:223.70px;font:normal 13.35px 'Liberation Sans', sans-serif;line-height:13.35px;color:#000;white-space:pre;z-index:5;left:800.13px;transform-origin:100% 50%;transform:scaleX(0.9656);">282</div><div style="position:absolute;top:223.70px;font:normal 13.35px 'Liberation Sans', sans-serif;line-height:13.35px;color:#000;white-space:pre;z-index:5;left:888.98px;transform-origin:100% 50%;">6</div><div style="position:absolute;top:223.70px;font:normal 13.35px 'Liberation Sans', sans-serif;line-height:13.35px;color:#000;white-space:pre;z-index:5;left:900.80px;transform-origin:0 50%;transform:scaleX(0.9519);">Canada</div><div style="position:absolute;top:223.70px;font:normal 13.35px 'Liberation Sans', sans-serif;line-height:13.35px;color:#000;white-space:pre;z-index:5;left:1008.80px;transform-origin:0 50%;transform:scaleX(1.0609);">North America</div><div style="position:absolute;top:223.70px;font:normal 13.35px 'Liberation Sans', sans-serif;line-height:13.35px;color:#000;white-space:pre;z-index:5;left:1195.98px;transform-origin:100% 50%;">5</div><div style="position:absolute;top:223.70px;font:normal 13.35px 'Liberation Sans', sans-serif;line-height:13.35px;color:#000;white-space:pre;z-index:5;left:1207.80px;transform-origin:0 50%;transform:scaleX(0.9048);">CARGO TRANSPORT 5</div><div style="position:absolute;top:243.70px;font:normal 13.35px 'Liberation Sans', sans-serif;line-height:13.35px;color:#000;white-space:pre;z-index:5;left:102.56px;transform-origin:100% 50%;">16</div><div style="position:absolute;top:243.70px;font:normal 13.35px 'Liberation Sans', sans-serif;line-height:13.35px;color:#000;white-space:pre;z-index:5;left:136.29px;transform-origin:100% 50%;transform:scaleX(0.9701);">43661</div><div style="position:absolute;top:243.70px;font:normal 13.35px 'Liberation Sans', sans-serif;line-height:13.35px;color:#000;white-space:pre;z-index:5;left:188.03px;transform-origin:100% 50%;transform:scaleX(1.0450);">5/31/2011</div><div style="position:absolute;top:243.70px;font:normal 13.35px 'Liberation Sans', sans-serif;line-height:13.35px;color:#000;white-space:pre;z-index:5;left:261.03px;transform-origin:100% 50%;transform:scaleX(1.0552);">6/12/2011</div><div style="position:absolute;top:243.70px;font:normal 13.35px 'Liberation Sans', sans-serif;line-height:13.35px;color:#000;white-space:pre;z-index:5;left:341.45px;transform-origin:100% 50%;transform:scaleX(1.0696);">6/7/2011</div><div style="position:absolute;top:243.70px;font:normal 13.35px 'Liberation Sans', sans-serif;line-height:13.35px;color:#000;white-space:pre;z-index:5;left:442.98px;transform-origin:100% 50%;">5</div><div style="position:absolute;top:243.70px;font:normal 13.35px 'Liberation Sans', sans-serif;line-height:13.35px;color:#000;white-space:pre;z-index:5;left:454.80px;transform-origin:0 50%;transform:scaleX(1.0411);">Shipped</div><div style="position:absolute;top:243.70px;font:normal 13.35px 'Liberation Sans', sans-serif;line-height:13.35px;color:#000;white-space:pre;z-index:5;left:638.98px;transform-origin:100% 50%;">0</div><div style="position:absolute;top:243.70px;font:normal 13.35px 'Liberation Sans', sans-serif;line-height:13.35px;color:#000;white-space:pre;z-index:5;left:689.29px;transform-origin:100% 50%;transform:scaleX(0.9539);">29734</div><div style="position:absolute;top:243.70px;font:normal 13.35px 'Liberation Sans', sans-serif;line-height:13.35px;color:#000;white-space:pre;z-index:5;left:800.13px;transform-origin:100% 50%;transform:scaleX(0.9656);">282</div><div style="position:absolute;top:243.70px;font:normal 13.35px 'Liberation Sans', sans-serif;line-height:13.35px;color:#000;white-space:pre;z-index:5;left:888.98px;transform-origin:100% 50%;">6</div><div style="position:absolute;top:243.70px;font:normal 13.35px 'Liberation Sans', sans-serif;line-height:13.35px;color:#000;white-space:pre;z-index:5;left:900.80px;transform-origin:0 50%;transform:scaleX(0.9519);">Canada</div><div style="position:absolute;top:243.70px;font:normal 13.35px 'Liberation Sans', sans-serif;line-height:13.35px;color:#000;white-space:pre;z-index:5;left:1008.80px;transform-origin:0 50%;transform:scaleX(1.0609);">North America</div><div style="position:absolute;top:243.70px;font:normal 13.35px 'Liberation Sans', sans-serif;line-height:13.35px;color:#000;white-space:pre;z-index:5;left:1195.98px;transform-origin:100% 50%;">5</div><div style="position:absolute;top:243.70px;font:normal 13.35px 'Liberation Sans', sans-serif;line-height:13.35px;color:#000;white-space:pre;z-index:5;left:1207.80px;transform-origin:0 50%;transform:scaleX(0.9048);">CARGO TRANSPORT 5</div><div style="position:absolute;top:263.70px;font:normal 13.35px 'Liberation Sans', sans-serif;line-height:13.35px;color:#000;white-space:pre;z-index:5;left:102.56px;transform-origin:100% 50%;">17</div><div style="position:absolute;top:263.70px;font:normal 13.35px 'Liberation Sans', sans-serif;line-height:13.35px;color:#000;white-space:pre;z-index:5;left:136.29px;transform-origin:100% 50%;transform:scaleX(0.9701);">43661</div><div style="position:absolute;top:263.70px;font:normal 13.35px 'Liberation Sans', sans-serif;line-height:13.35px;color:#000;white-space:pre;z-index:5;left:188.03px;transform-origin:100% 50%;transform:scaleX(1.0450);">5/31/2011</div><div style="position:absolute;top:263.70px;font:normal 13.35px 'Liberation Sans', sans-serif;line-height:13.35px;color:#000;white-space:pre;z-index:5;left:261.03px;transform-origin:100% 50%;transform:scaleX(1.0552);">6/12/2011</div><div style="position:absolute;top:263.70px;font:normal 13.35px 'Liberation Sans', sans-serif;line-height:13.35px;color:#000;white-space:pre;z-index:5;left:341.45px;transform-origin:100% 50%;transform:scaleX(1.0696);">6/7/2011</div><div style="position:absolute;top:263.70px;font:normal 13.35px 'Liberation Sans', sans-serif;line-height:13.35px;color:#000;white-space:pre;z-index:5;left:442.98px;transform-origin:100% 50%;">5</div><div style="position:absolute;top:263.70px;font:normal 13.35px 'Liberation Sans', sans-serif;line-height:13.35px;color:#000;white-space:pre;z-index:5;left:454.80px;transform-origin:0 50%;transform:scaleX(1.0411);">Shipped</div><div style="position:absolute;top:263.70px;font:normal 13.35px 'Liberation Sans', sans-serif;line-height:13.35px;color:#000;white-space:pre;z-index:5;left:638.98px;transform-origin:100% 50%;">0</div><div style="position:absolute;top:263.70px;font:normal 13.35px 'Liberation Sans', sans-serif;line-height:13.35px;color:#000;white-space:pre;z-index:5;left:689.29px;transform-origin:100% 50%;transform:scaleX(0.9539);">29734</div><div style="position:absolute;top:263.70px;font:normal 13.35px 'Liberation Sans', sans-serif;line-height:13.35px;color:#000;white-space:pre;z-index:5;left:800.13px;transform-origin:100% 50%;transform:scaleX(0.9656);">282</div><div style="position:absolute;top:263.70px;font:normal 13.35px 'Liberation Sans', sans-serif;line-height:13.35px;color:#000;white-space:pre;z-index:5;left:888.98px;transform-origin:100% 50%;">6</div><div style="position:absolute;top:263.70px;font:normal 13.35px 'Liberation Sans', sans-serif;line-height:13.35px;color:#000;white-space:pre;z-index:5;left:900.80px;transform-origin:0 50%;transform:scaleX(0.9519);">Canada</div><div style="position:absolute;top:263.70px;font:normal 13.35px 'Liberation Sans', sans-serif;line-height:13.35px;color:#000;white-space:pre;z-index:5;left:1008.80px;transform-origin:0 50%;transform:scaleX(1.0609);">North America</div><div style="position:absolute;top:263.70px;font:normal 13.35px 'Liberation Sans', sans-serif;line-height:13.35px;color:#000;white-space:pre;z-index:5;left:1195.98px;transform-origin:100% 50%;">5</div><div style="position:absolute;top:263.70px;font:normal 13.35px 'Liberation Sans', sans-serif;line-height:13.35px;color:#000;white-space:pre;z-index:5;left:1207.80px;transform-origin:0 50%;transform:scaleX(0.9048);">CARGO TRANSPORT 5</div><div style="position:absolute;top:283.70px;font:normal 13.35px 'Liberation Sans', sans-serif;line-height:13.35px;color:#000;white-space:pre;z-index:5;left:102.56px;transform-origin:100% 50%;">18</div><div style="position:absolute;top:283.70px;font:normal 13.35px 'Liberation Sans', sans-serif;line-height:13.35px;color:#000;white-space:pre;z-index:5;left:136.29px;transform-origin:100% 50%;transform:scaleX(0.9701);">43661</div><div style="position:absolute;top:283.70px;font:normal 13.35px 'Liberation Sans', sans-serif;line-height:13.35px;color:#000;white-space:pre;z-index:5;left:188.03px;transform-origin:100% 50%;transform:scaleX(1.0450);">5/31/2011</div><div style="position:absolute;top:283.70px;font:normal 13.35px 'Liberation Sans', sans-serif;line-height:13.35px;color:#000;white-space:pre;z-index:5;left:261.03px;transform-origin:100% 50%;transform:scaleX(1.0552);">6/12/2011</div><div style="position:absolute;top:283.70px;font:normal 13.35px 'Liberation Sans', sans-serif;line-height:13.35px;color:#000;white-space:pre;z-index:5;left:341.45px;transform-origin:100% 50%;transform:scaleX(1.0696);">6/7/2011</div><div style="position:absolute;top:283.70px;font:normal 13.35px 'Liberation Sans', sans-serif;line-height:13.35px;color:#000;white-space:pre;z-index:5;left:442.98px;transform-origin:100% 50%;">5</div><div style="position:absolute;top:283.70px;font:normal 13.35px 'Liberation Sans', sans-serif;line-height:13.35px;color:#000;white-space:pre;z-index:5;left:454.80px;transform-origin:0 50%;transform:scaleX(1.0411);">Shipped</div><div style="position:absolute;top:283.70px;font:normal 13.35px 'Liberation Sans', sans-serif;line-height:13.35px;color:#000;white-space:pre;z-index:5;left:638.98px;transform-origin:100% 50%;">0</div><div style="position:absolute;top:283.70px;font:normal 13.35px 'Liberation Sans', sans-serif;line-height:13.35px;color:#000;white-space:pre;z-index:5;left:689.29px;transform-origin:100% 50%;transform:scaleX(0.9539);">29734</div><div style="position:absolute;top:283.70px;font:normal 13.35px 'Liberation Sans', sans-serif;line-height:13.35px;color:#000;white-space:pre;z-index:5;left:800.13px;transform-origin:100% 50%;transform:scaleX(0.9656);">282</div><div style="position:absolute;top:283.70px;font:normal 13.35px 'Liberation Sans', sans-serif;line-height:13.35px;color:#000;white-space:pre;z-index:5;left:888.98px;transform-origin:100% 50%;">6</div><div style="position:absolute;top:283.70px;font:normal 13.35px 'Liberation Sans', sans-serif;line-height:13.35px;color:#000;white-space:pre;z-index:5;left:900.80px;transform-origin:0 50%;transform:scaleX(0.9519);">Canada</div><div style="position:absolute;top:283.70px;font:normal 13.35px 'Liberation Sans', sans-serif;line-height:13.35px;color:#000;white-space:pre;z-index:5;left:1008.80px;transform-origin:0 50%;transform:scaleX(1.0609);">North America</div><div style="position:absolute;top:283.70px;font:normal 13.35px 'Liberation Sans', sans-serif;line-height:13.35px;color:#000;white-space:pre;z-index:5;left:1195.98px;transform-origin:100% 50%;">5</div><div style="position:absolute;top:283.70px;font:normal 13.35px 'Liberation Sans', sans-serif;line-height:13.35px;color:#000;white-space:pre;z-index:5;left:1207.80px;transform-origin:0 50%;transform:scaleX(0.9048);">CARGO TRANSPORT 5</div><div style="position:absolute;top:303.70px;font:normal 13.35px 'Liberation Sans', sans-serif;line-height:13.35px;color:#000;white-space:pre;z-index:5;left:102.56px;transform-origin:100% 50%;">19</div><div style="position:absolute;top:303.70px;font:normal 13.35px 'Liberation Sans', sans-serif;line-height:13.35px;color:#000;white-space:pre;z-index:5;left:136.29px;transform-origin:100% 50%;transform:scaleX(0.9701);">43661</div><div style="position:absolute;top:303.70px;font:normal 13.35px 'Liberation Sans', sans-serif;line-height:13.35px;color:#000;white-space:pre;z-index:5;left:188.03px;transform-origin:100% 50%;transform:scaleX(1.0450);">5/31/2011</div><div style="position:absolute;top:303.70px;font:normal 13.35px 'Liberation Sans', sans-serif;line-height:13.35px;color:#000;white-space:pre;z-index:5;left:261.03px;transform-origin:100% 50%;transform:scaleX(1.0552);">6/12/2011</div><div style="position:absolute;top:303.70px;font:normal 13.35px 'Liberation Sans', sans-serif;line-height:13.35px;color:#000;white-space:pre;z-index:5;left:341.45px;transform-origin:100% 50%;transform:scaleX(1.0696);">6/7/2011</div><div style="position:absolute;top:303.70px;font:normal 13.35px 'Liberation Sans', sans-serif;line-height:13.35px;color:#000;white-space:pre;z-index:5;left:442.98px;transform-origin:100% 50%;">5</div><div style="position:absolute;top:303.70px;font:normal 13.35px 'Liberation Sans', sans-serif;line-height:13.35px;color:#000;white-space:pre;z-index:5;left:454.80px;transform-origin:0 50%;transform:scaleX(1.0411);">Shipped</div><div style="position:absolute;top:303.70px;font:normal 13.35px 'Liberation Sans', sans-serif;line-height:13.35px;color:#000;white-space:pre;z-index:5;left:638.98px;transform-origin:100% 50%;">0</div><div style="position:absolute;top:303.70px;font:normal 13.35px 'Liberation Sans', sans-serif;line-height:13.35px;color:#000;white-space:pre;z-index:5;left:689.29px;transform-origin:100% 50%;transform:scaleX(0.9539);">29734</div><div style="position:absolute;top:303.70px;font:normal 13.35px 'Liberation Sans', sans-serif;line-height:13.35px;color:#000;white-space:pre;z-index:5;left:800.13px;transform-origin:100% 50%;transform:scaleX(0.9656);">282</div><div style="position:absolute;top:303.70px;font:normal 13.35px 'Liberation Sans', sans-serif;line-height:13.35px;color:#000;white-space:pre;z-index:5;left:888.98px;transform-origin:100% 50%;">6</div><div style="position:absolute;top:303.70px;font:normal 13.35px 'Liberation Sans', sans-serif;line-height:13.35px;color:#000;white-space:pre;z-index:5;left:900.80px;transform-origin:0 50%;transform:scaleX(0.9519);">Canada</div><div style="position:absolute;top:303.70px;font:normal 13.35px 'Liberation Sans', sans-serif;line-height:13.35px;color:#000;white-space:pre;z-index:5;left:1008.80px;transform-origin:0 50%;transform:scaleX(1.0609);">North America</div><div style="position:absolute;top:303.70px;font:normal 13.35px 'Liberation Sans', sans-serif;line-height:13.35px;color:#000;white-space:pre;z-index:5;left:1195.98px;transform-origin:100% 50%;">5</div><div style="position:absolute;top:303.70px;font:normal 13.35px 'Liberation Sans', sans-serif;line-height:13.35px;color:#000;white-space:pre;z-index:5;left:1207.80px;transform-origin:0 50%;transform:scaleX(0.9048);">CARGO TRANSPORT 5</div><div style="position:absolute;top:323.70px;font:normal 13.35px 'Liberation Sans', sans-serif;line-height:13.35px;color:#000;white-space:pre;z-index:5;left:102.56px;transform-origin:100% 50%;">20</div><div style="position:absolute;top:323.70px;font:normal 13.35px 'Liberation Sans', sans-serif;line-height:13.35px;color:#000;white-space:pre;z-index:5;left:136.29px;transform-origin:100% 50%;transform:scaleX(0.9701);">43661</div><div style="position:absolute;top:323.70px;font:normal 13.35px 'Liberation Sans', sans-serif;line-height:13.35px;color:#000;white-space:pre;z-index:5;left:188.03px;transform-origin:100% 50%;transform:scaleX(1.0450);">5/31/2011</div><div style="position:absolute;top:323.70px;font:normal 13.35px 'Liberation Sans', sans-serif;line-height:13.35px;color:#000;white-space:pre;z-index:5;left:261.03px;transform-origin:100% 50%;transform:scaleX(1.0552);">6/12/2011</div><div style="position:absolute;top:323.70px;font:normal 13.35px 'Liberation Sans', sans-serif;line-height:13.35px;color:#000;white-space:pre;z-index:5;left:341.45px;transform-origin:100% 50%;transform:scaleX(1.0696);">6/7/2011</div><div style="position:absolute;top:323.70px;font:normal 13.35px 'Liberation Sans', sans-serif;line-height:13.35px;color:#000;white-space:pre;z-index:5;left:442.98px;transform-origin:100% 50%;">5</div><div style="position:absolute;top:323.70px;font:normal 13.35px 'Liberation Sans', sans-serif;line-height:13.35px;color:#000;white-space:pre;z-index:5;left:454.80px;transform-origin:0 50%;transform:scaleX(1.0411);">Shipped</div><div style="position:absolute;top:323.70px;font:normal 13.35px 'Liberation Sans', sans-serif;line-height:13.35px;color:#000;white-space:pre;z-index:5;left:638.98px;transform-origin:100% 50%;">0</div><div style="position:absolute;top:323.70px;font:normal 13.35px 'Liberation Sans', sans-serif;line-height:13.35px;color:#000;white-space:pre;z-index:5;left:689.29px;transform-origin:100% 50%;transform:scaleX(0.9539);">29734</div><div style="position:absolute;top:323.70px;font:normal 13.35px 'Liberation Sans', sans-serif;line-height:13.35px;color:#000;white-space:pre;z-index:5;left:800.13px;transform-origin:100% 50%;transform:scaleX(0.9656);">282</div><div style="position:absolute;top:323.70px;font:normal 13.35px 'Liberation Sans', sans-serif;line-height:13.35px;color:#000;white-space:pre;z-index:5;left:888.98px;transform-origin:100% 50%;">6</div><div style="position:absolute;top:323.70px;font:normal 13.35px 'Liberation Sans', sans-serif;line-height:13.35px;color:#000;white-space:pre;z-index:5;left:900.80px;transform-origin:0 50%;transform:scaleX(0.9519);">Canada</div><div style="position:absolute;top:323.70px;font:normal 13.35px 'Liberation Sans', sans-serif;line-height:13.35px;color:#000;white-space:pre;z-index:5;left:1008.80px;transform-origin:0 50%;transform:scaleX(1.0609);">North America</div><div style="position:absolute;top:323.70px;font:normal 13.35px 'Liberation Sans', sans-serif;line-height:13.35px;color:#000;white-space:pre;z-index:5;left:1195.98px;transform-origin:100% 50%;">5</div><div style="position:absolute;top:323.70px;font:normal 13.35px 'Liberation Sans', sans-serif;line-height:13.35px;color:#000;white-space:pre;z-index:5;left:1207.80px;transform-origin:0 50%;transform:scaleX(0.9048);">CARGO TRANSPORT 5</div><div style="position:absolute;top:343.70px;font:normal 13.35px 'Liberation Sans', sans-serif;line-height:13.35px;color:#000;white-space:pre;z-index:5;left:102.56px;transform-origin:100% 50%;">21</div><div style="position:absolute;top:343.70px;font:normal 13.35px 'Liberation Sans', sans-serif;line-height:13.35px;color:#000;white-space:pre;z-index:5;left:136.29px;transform-origin:100% 50%;transform:scaleX(0.9701);">43661</div><div style="position:absolute;top:343.70px;font:normal 13.35px 'Liberation Sans', sans-serif;line-height:13.35px;color:#000;white-space:pre;z-index:5;left:188.03px;transform-origin:100% 50%;transform:scaleX(1.0450);">5/31/2011</div><div style="position:absolute;top:343.70px;font:normal 13.35px 'Liberation Sans', sans-serif;line-height:13.35px;color:#000;white-space:pre;z-index:5;left:261.03px;transform-origin:100% 50%;transform:scaleX(1.0552);">6/12/2011</div><div style="position:absolute;top:343.70px;font:normal 13.35px 'Liberation Sans', sans-serif;line-height:13.35px;color:#000;white-space:pre;z-index:5;left:341.45px;transform-origin:100% 50%;transform:scaleX(1.0696);">6/7/2011</div><div style="position:absolute;top:343.70px;font:normal 13.35px 'Liberation Sans', sans-serif;line-height:13.35px;color:#000;white-space:pre;z-index:5;left:442.98px;transform-origin:100% 50%;">5</div><div style="position:absolute;top:343.70px;font:normal 13.35px 'Liberation Sans', sans-serif;line-height:13.35px;color:#000;white-space:pre;z-index:5;left:454.80px;transform-origin:0 50%;transform:scaleX(1.0411);">Shipped</div><div style="position:absolute;top:343.70px;font:normal 13.35px 'Liberation Sans', sans-serif;line-height:13.35px;color:#000;white-space:pre;z-index:5;left:638.98px;transform-origin:100% 50%;">0</div><div style="position:absolute;top:343.70px;font:normal 13.35px 'Liberation Sans', sans-serif;line-height:13.35px;color:#000;white-space:pre;z-index:5;left:689.29px;transform-origin:100% 50%;transform:scaleX(0.9539);">29734</div><div style="position:absolute;top:343.70px;font:normal 13.35px 'Liberation Sans', sans-serif;line-height:13.35px;color:#000;white-space:pre;z-index:5;left:800.13px;transform-origin:100% 50%;transform:scaleX(0.9656);">282</div><div style="position:absolute;top:343.70px;font:normal 13.35px 'Liberation Sans', sans-serif;line-height:13.35px;color:#000;white-space:pre;z-index:5;left:888.98px;transform-origin:100% 50%;">6</div><div style="position:absolute;top:343.70px;font:normal 13.35px 'Liberation Sans', sans-serif;line-height:13.35px;color:#000;white-space:pre;z-index:5;left:900.80px;transform-origin:0 50%;transform:scaleX(0.9519);">Canada</div><div style="position:absolute;top:343.70px;font:normal 13.35px 'Liberation Sans', sans-serif;line-height:13.35px;color:#000;white-space:pre;z-index:5;left:1008.80px;transform-origin:0 50%;transform:scaleX(1.0609);">North America</div><div style="position:absolute;top:343.70px;font:normal 13.35px 'Liberation Sans', sans-serif;line-height:13.35px;color:#000;white-space:pre;z-index:5;left:1195.98px;transform-origin:100% 50%;">5</div><div style="position:absolute;top:343.70px;font:normal 13.35px 'Liberation Sans', sans-serif;line-height:13.35px;color:#000;white-space:pre;z-index:5;left:1207.80px;transform-origin:0 50%;transform:scaleX(0.9048);">CARGO TRANSPORT 5</div><div style="position:absolute;top:363.70px;font:normal 13.35px 'Liberation Sans', sans-serif;line-height:13.35px;color:#000;white-space:pre;z-index:5;left:102.56px;transform-origin:100% 50%;">22</div><div style="position:absolute;top:363.70px;font:normal 13.35px 'Liberation Sans', sans-serif;line-height:13.35px;color:#000;white-space:pre;z-index:5;left:136.29px;transform-origin:100% 50%;transform:scaleX(0.9701);">43661</div><div style="position:absolute;top:363.70px;font:normal 13.35px 'Liberation Sans', sans-serif;line-height:13.35px;color:#000;white-space:pre;z-index:5;left:188.03px;transform-origin:100% 50%;transform:scaleX(1.0450);">5/31/2011</div><div style="position:absolute;top:363.70px;font:normal 13.35px 'Liberation Sans', sans-serif;line-height:13.35px;color:#000;white-space:pre;z-index:5;left:261.03px;transform-origin:100% 50%;transform:scaleX(1.0552);">6/12/2011</div><div style="position:absolute;top:363.70px;font:normal 13.35px 'Liberation Sans', sans-serif;line-height:13.35px;color:#000;white-space:pre;z-index:5;left:341.45px;transform-origin:100% 50%;transform:scaleX(1.0696);">6/7/2011</div><div style="position:absolute;top:363.70px;font:normal 13.35px 'Liberation Sans', sans-serif;line-height:13.35px;color:#000;white-space:pre;z-index:5;left:442.98px;transform-origin:100% 50%;">5</div><div style="position:absolute;top:363.70px;font:normal 13.35px 'Liberation Sans', sans-serif;line-height:13.35px;color:#000;white-space:pre;z-index:5;left:454.80px;transform-origin:0 50%;transform:scaleX(1.0411);">Shipped</div><div style="position:absolute;top:363.70px;font:normal 13.35px 'Liberation Sans', sans-serif;line-height:13.35px;color:#000;white-space:pre;z-index:5;left:638.98px;transform-origin:100% 50%;">0</div><div style="position:absolute;top:363.70px;font:normal 13.35px 'Liberation Sans', sans-serif;line-height:13.35px;color:#000;white-space:pre;z-index:5;left:689.29px;transform-origin:100% 50%;transform:scaleX(0.9539);">29734</div><div style="position:absolute;top:363.70px;font:normal 13.35px 'Liberation Sans', sans-serif;line-height:13.35px;color:#000;white-space:pre;z-index:5;left:800.13px;transform-origin:100% 50%;transform:scaleX(0.9656);">282</div><div style="position:absolute;top:363.70px;font:normal 13.35px 'Liberation Sans', sans-serif;line-height:13.35px;color:#000;white-space:pre;z-index:5;left:888.98px;transform-origin:100% 50%;">6</div><div style="position:absolute;top:363.70px;font:normal 13.35px 'Liberation Sans', sans-serif;line-height:13.35px;color:#000;white-space:pre;z-index:5;left:900.80px;transform-origin:0 50%;transform:scaleX(0.9519);">Canada</div><div style="position:absolute;top:363.70px;font:normal 13.35px 'Liberation Sans', sans-serif;line-height:13.35px;color:#000;white-space:pre;z-index:5;left:1008.80px;transform-origin:0 50%;transform:scaleX(1.0609);">North America</div><div style="position:absolute;top:363.70px;font:normal 13.35px 'Liberation Sans', sans-serif;line-height:13.35px;color:#000;white-space:pre;z-index:5;left:1195.98px;transform-origin:100% 50%;">5</div><div style="position:absolute;top:363.70px;font:normal 13.35px 'Liberation Sans', sans-serif;line-height:13.35px;color:#000;white-space:pre;z-index:5;left:1207.80px;transform-origin:0 50%;transform:scaleX(0.9048);">CARGO TRANSPORT 5</div><div style="position:absolute;top:383.70px;font:normal 13.35px 'Liberation Sans', sans-serif;line-height:13.35px;color:#000;white-space:pre;z-index:5;left:102.56px;transform-origin:100% 50%;">23</div><div style="position:absolute;top:383.70px;font:normal 13.35px 'Liberation Sans', sans-serif;line-height:13.35px;color:#000;white-space:pre;z-index:5;left:136.29px;transform-origin:100% 50%;transform:scaleX(0.9701);">43661</div><div style="position:absolute;top:383.70px;font:normal 13.35px 'Liberation Sans', sans-serif;line-height:13.35px;color:#000;white-space:pre;z-index:5;left:188.03px;transform-origin:100% 50%;transform:scaleX(1.0450);">5/31/2011</div><div style="position:absolute;top:383.70px;font:normal 13.35px 'Liberation Sans', sans-serif;line-height:13.35px;color:#000;white-space:pre;z-index:5;left:261.03px;transform-origin:100% 50%;transform:scaleX(1.0552);">6/12/2011</div><div style="position:absolute;top:383.70px;font:normal 13.35px 'Liberation Sans', sans-serif;line-height:13.35px;color:#000;white-space:pre;z-index:5;left:341.45px;transform-origin:100% 50%;transform:scaleX(1.0696);">6/7/2011</div><div style="position:absolute;top:383.70px;font:normal 13.35px 'Liberation Sans', sans-serif;line-height:13.35px;color:#000;white-space:pre;z-index:5;left:442.98px;transform-origin:100% 50%;">5</div><div style="position:absolute;top:383.70px;font:normal 13.35px 'Liberation Sans', sans-serif;line-height:13.35px;color:#000;white-space:pre;z-index:5;left:454.80px;transform-origin:0 50%;transform:scaleX(1.0411);">Shipped</div><div style="position:absolute;top:383.70px;font:normal 13.35px 'Liberation Sans', sans-serif;line-height:13.35px;color:#000;white-space:pre;z-index:5;left:638.98px;transform-origin:100% 50%;">0</div><div style="position:absolute;top:383.70px;font:normal 13.35px 'Liberation Sans', sans-serif;line-height:13.35px;color:#000;white-space:pre;z-index:5;left:689.29px;transform-origin:100% 50%;transform:scaleX(0.9539);">29734</div><div style="position:absolute;top:383.70px;font:normal 13.35px 'Liberation Sans', sans-serif;line-height:13.35px;color:#000;white-space:pre;z-index:5;left:800.13px;transform-origin:100% 50%;transform:scaleX(0.9656);">282</div><div style="position:absolute;top:383.70px;font:normal 13.35px 'Liberation Sans', sans-serif;line-height:13.35px;color:#000;white-space:pre;z-index:5;left:888.98px;transform-origin:100% 50%;">6</div><div style="position:absolute;top:383.70px;font:normal 13.35px 'Liberation Sans', sans-serif;line-height:13.35px;color:#000;white-space:pre;z-index:5;left:900.80px;transform-origin:0 50%;transform:scaleX(0.9519);">Canada</div><div style="position:absolute;top:383.70px;font:normal 13.35px 'Liberation Sans', sans-serif;line-height:13.35px;color:#000;white-space:pre;z-index:5;left:1008.80px;transform-origin:0 50%;transform:scaleX(1.0609);">North America</div><div style="position:absolute;top:383.70px;font:normal 13.35px 'Liberation Sans', sans-serif;line-height:13.35px;color:#000;white-space:pre;z-index:5;left:1195.98px;transform-origin:100% 50%;">5</div><div style="position:absolute;top:383.70px;font:normal 13.35px 'Liberation Sans', sans-serif;line-height:13.35px;color:#000;white-space:pre;z-index:5;left:1207.80px;transform-origin:0 50%;transform:scaleX(0.9048);">CARGO TRANSPORT 5</div><div style="position:absolute;top:403.70px;font:normal 13.35px 'Liberation Sans', sans-serif;line-height:13.35px;color:#000;white-space:pre;z-index:5;left:102.56px;transform-origin:100% 50%;">24</div><div style="position:absolute;top:403.70px;font:normal 13.35px 'Liberation Sans', sans-serif;line-height:13.35px;color:#000;white-space:pre;z-index:5;left:136.29px;transform-origin:100% 50%;transform:scaleX(0.9701);">43661</div><div style="position:absolute;top:403.70px;font:normal 13.35px 'Liberation Sans', sans-serif;line-height:13.35px;color:#000;white-space:pre;z-index:5;left:188.03px;transform-origin:100% 50%;transform:scaleX(1.0450);">5/31/2011</div><div style="position:absolute;top:403.70px;font:normal 13.35px 'Liberation Sans', sans-serif;line-height:13.35px;color:#000;white-space:pre;z-index:5;left:261.03px;transform-origin:100% 50%;transform:scaleX(1.0552);">6/12/2011</div><div style="position:absolute;top:403.70px;font:normal 13.35px 'Liberation Sans', sans-serif;line-height:13.35px;color:#000;white-space:pre;z-index:5;left:341.45px;transform-origin:100% 50%;transform:scaleX(1.0696);">6/7/2011</div><div style="position:absolute;top:403.70px;font:normal 13.35px 'Liberation Sans', sans-serif;line-height:13.35px;color:#000;white-space:pre;z-index:5;left:442.98px;transform-origin:100% 50%;">5</div><div style="position:absolute;top:403.70px;font:normal 13.35px 'Liberation Sans', sans-serif;line-height:13.35px;color:#000;white-space:pre;z-index:5;left:454.80px;transform-origin:0 50%;transform:scaleX(1.0411);">Shipped</div><div style="position:absolute;top:403.70px;font:normal 13.35px 'Liberation Sans', sans-serif;line-height:13.35px;color:#000;white-space:pre;z-index:5;left:638.98px;transform-origin:100% 50%;">0</div><div style="position:absolute;top:403.70px;font:normal 13.35px 'Liberation Sans', sans-serif;line-height:13.35px;color:#000;white-space:pre;z-index:5;left:689.29px;transform-origin:100% 50%;transform:scaleX(0.9539);">29734</div><div style="position:absolute;top:403.70px;font:normal 13.35px 'Liberation Sans', sans-serif;line-height:13.35px;color:#000;white-space:pre;z-index:5;left:800.13px;transform-origin:100% 50%;transform:scaleX(0.9656);">282</div><div style="position:absolute;top:403.70px;font:normal 13.35px 'Liberation Sans', sans-serif;line-height:13.35px;color:#000;white-space:pre;z-index:5;left:888.98px;transform-origin:100% 50%;">6</div><div style="position:absolute;top:403.70px;font:normal 13.35px 'Liberation Sans', sans-serif;line-height:13.35px;color:#000;white-space:pre;z-index:5;left:900.80px;transform-origin:0 50%;transform:scaleX(0.9519);">Canada</div><div style="position:absolute;top:403.70px;font:normal 13.35px 'Liberation Sans', sans-serif;line-height:13.35px;color:#000;white-space:pre;z-index:5;left:1008.80px;transform-origin:0 50%;transform:scaleX(1.0609);">North America</div><div style="position:absolute;top:403.70px;font:normal 13.35px 'Liberation Sans', sans-serif;line-height:13.35px;color:#000;white-space:pre;z-index:5;left:1195.98px;transform-origin:100% 50%;">5</div><div style="position:absolute;top:403.70px;font:normal 13.35px 'Liberation Sans', sans-serif;line-height:13.35px;color:#000;white-space:pre;z-index:5;left:1207.80px;transform-origin:0 50%;transform:scaleX(0.9048);">CARGO TRANSPORT 5</div><div style="position:absolute;top:423.70px;font:normal 13.35px 'Liberation Sans', sans-serif;line-height:13.35px;color:#000;white-space:pre;z-index:5;left:102.56px;transform-origin:100% 50%;">25</div><div style="position:absolute;top:423.70px;font:normal 13.35px 'Liberation Sans', sans-serif;line-height:13.35px;color:#000;white-space:pre;z-index:5;left:136.29px;transform-origin:100% 50%;transform:scaleX(0.9701);">43661</div><div style="position:absolute;top:423.70px;font:normal 13.35px 'Liberation Sans', sans-serif;line-height:13.35px;color:#000;white-space:pre;z-index:5;left:188.03px;transform-origin:100% 50%;transform:scaleX(1.0450);">5/31/2011</div><div style="position:absolute;top:423.70px;font:normal 13.35px 'Liberation Sans', sans-serif;line-height:13.35px;color:#000;white-space:pre;z-index:5;left:261.03px;transform-origin:100% 50%;transform:scaleX(1.0552);">6/12/2011</div><div style="position:absolute;top:423.70px;font:normal 13.35px 'Liberation Sans', sans-serif;line-height:13.35px;color:#000;white-space:pre;z-index:5;left:341.45px;transform-origin:100% 50%;transform:scaleX(1.0696);">6/7/2011</div><div style="position:absolute;top:423.70px;font:normal 13.35px 'Liberation Sans', sans-serif;line-height:13.35px;color:#000;white-space:pre;z-index:5;left:442.98px;transform-origin:100% 50%;">5</div><div style="position:absolute;top:423.70px;font:normal 13.35px 'Liberation Sans', sans-serif;line-height:13.35px;color:#000;white-space:pre;z-index:5;left:454.80px;transform-origin:0 50%;transform:scaleX(1.0411);">Shipped</div><div style="position:absolute;top:423.70px;font:normal 13.35px 'Liberation Sans', sans-serif;line-height:13.35px;color:#000;white-space:pre;z-index:5;left:638.98px;transform-origin:100% 50%;">0</div><div style="position:absolute;top:423.70px;font:normal 13.35px 'Liberation Sans', sans-serif;line-height:13.35px;color:#000;white-space:pre;z-index:5;left:689.29px;transform-origin:100% 50%;transform:scaleX(0.9539);">29734</div><div style="position:absolute;top:423.70px;font:normal 13.35px 'Liberation Sans', sans-serif;line-height:13.35px;color:#000;white-space:pre;z-index:5;left:800.13px;transform-origin:100% 50%;transform:scaleX(0.9656);">282</div><div style="position:absolute;top:423.70px;font:normal 13.35px 'Liberation Sans', sans-serif;line-height:13.35px;color:#000;white-space:pre;z-index:5;left:888.98px;transform-origin:100% 50%;">6</div><div style="position:absolute;top:423.70px;font:normal 13.35px 'Liberation Sans', sans-serif;line-height:13.35px;color:#000;white-space:pre;z-index:5;left:900.80px;transform-origin:0 50%;transform:scaleX(0.9519);">Canada</div><div style="position:absolute;top:423.70px;font:normal 13.35px 'Liberation Sans', sans-serif;line-height:13.35px;color:#000;white-space:pre;z-index:5;left:1008.80px;transform-origin:0 50%;transform:scaleX(1.0609);">North America</div><div style="position:absolute;top:423.70px;font:normal 13.35px 'Liberation Sans', sans-serif;line-height:13.35px;color:#000;white-space:pre;z-index:5;left:1195.98px;transform-origin:100% 50%;">5</div><div style="position:absolute;top:423.70px;font:normal 13.35px 'Liberation Sans', sans-serif;line-height:13.35px;color:#000;white-space:pre;z-index:5;left:1207.80px;transform-origin:0 50%;transform:scaleX(0.9048);">CARGO TRANSPORT 5</div><div style="position:absolute;top:443.70px;font:normal 13.35px 'Liberation Sans', sans-serif;line-height:13.35px;color:#000;white-space:pre;z-index:5;left:102.56px;transform-origin:100% 50%;">26</div><div style="position:absolute;top:443.70px;font:normal 13.35px 'Liberation Sans', sans-serif;line-height:13.35px;color:#000;white-space:pre;z-index:5;left:136.29px;transform-origin:100% 50%;transform:scaleX(0.9701);">43661</div><div style="position:absolute;top:443.70px;font:normal 13.35px 'Liberation Sans', sans-serif;line-height:13.35px;color:#000;white-space:pre;z-index:5;left:188.03px;transform-origin:100% 50%;transform:scaleX(1.0450);">5/31/2011</div><div style="position:absolute;top:443.70px;font:normal 13.35px 'Liberation Sans', sans-serif;line-height:13.35px;color:#000;white-space:pre;z-index:5;left:261.03px;transform-origin:100% 50%;transform:scaleX(1.0552);">6/12/2011</div><div style="position:absolute;top:443.70px;font:normal 13.35px 'Liberation Sans', sans-serif;line-height:13.35px;color:#000;white-space:pre;z-index:5;left:341.45px;transform-origin:100% 50%;transform:scaleX(1.0696);">6/7/2011</div><div style="position:absolute;top:443.70px;font:normal 13.35px 'Liberation Sans', sans-serif;line-height:13.35px;color:#000;white-space:pre;z-index:5;left:442.98px;transform-origin:100% 50%;">5</div><div style="position:absolute;top:443.70px;font:normal 13.35px 'Liberation Sans', sans-serif;line-height:13.35px;color:#000;white-space:pre;z-index:5;left:454.80px;transform-origin:0 50%;transform:scaleX(1.0411);">Shipped</div><div style="position:absolute;top:443.70px;font:normal 13.35px 'Liberation Sans', sans-serif;line-height:13.35px;color:#000;white-space:pre;z-index:5;left:638.98px;transform-origin:100% 50%;">0</div><div style="position:absolute;top:443.70px;font:normal 13.35px 'Liberation Sans', sans-serif;line-height:13.35px;color:#000;white-space:pre;z-index:5;left:689.29px;transform-origin:100% 50%;transform:scaleX(0.9539);">29734</div><div style="position:absolute;top:443.70px;font:normal 13.35px 'Liberation Sans', sans-serif;line-height:13.35px;color:#000;white-space:pre;z-index:5;left:800.13px;transform-origin:100% 50%;transform:scaleX(0.9656);">282</div><div style="position:absolute;top:443.70px;font:normal 13.35px 'Liberation Sans', sans-serif;line-height:13.35px;color:#000;white-space:pre;z-index:5;left:888.98px;transform-origin:100% 50%;">6</div><div style="position:absolute;top:443.70px;font:normal 13.35px 'Liberation Sans', sans-serif;line-height:13.35px;color:#000;white-space:pre;z-index:5;left:900.80px;transform-origin:0 50%;transform:scaleX(0.9519);">Canada</div><div style="position:absolute;top:443.70px;font:normal 13.35px 'Liberation Sans', sans-serif;line-height:13.35px;color:#000;white-space:pre;z-index:5;left:1008.80px;transform-origin:0 50%;transform:scaleX(1.0609);">North America</div><div style="position:absolute;top:443.70px;font:normal 13.35px 'Liberation Sans', sans-serif;line-height:13.35px;color:#000;white-space:pre;z-index:5;left:1195.98px;transform-origin:100% 50%;">5</div><div style="position:absolute;top:443.70px;font:normal 13.35px 'Liberation Sans', sans-serif;line-height:13.35px;color:#000;white-space:pre;z-index:5;left:1207.80px;transform-origin:0 50%;transform:scaleX(0.9048);">CARGO TRANSPORT 5</div><div style="position:absolute;top:463.70px;font:normal 13.35px 'Liberation Sans', sans-serif;line-height:13.35px;color:#000;white-space:pre;z-index:5;left:102.56px;transform-origin:100% 50%;">27</div><div style="position:absolute;top:463.70px;font:normal 13.35px 'Liberation Sans', sans-serif;line-height:13.35px;color:#000;white-space:pre;z-index:5;left:136.29px;transform-origin:100% 50%;transform:scaleX(0.9701);">43661</div><div style="position:absolute;top:463.70px;font:normal 13.35px 'Liberation Sans', sans-serif;line-height:13.35px;color:#000;white-space:pre;z-index:5;left:188.03px;transform-origin:100% 50%;transform:scaleX(1.0450);">5/31/2011</div><div style="position:absolute;top:463.70px;font:normal 13.35px 'Liberation Sans', sans-serif;line-height:13.35px;color:#000;white-space:pre;z-index:5;left:261.03px;transform-origin:100% 50%;transform:scaleX(1.0552);">6/12/2011</div><div style="position:absolute;top:463.70px;font:normal 13.35px 'Liberation Sans', sans-serif;line-height:13.35px;color:#000;white-space:pre;z-index:5;left:341.45px;transform-origin:100% 50%;transform:scaleX(1.0696);">6/7/2011</div><div style="position:absolute;top:463.70px;font:normal 13.35px 'Liberation Sans', sans-serif;line-height:13.35px;color:#000;white-space:pre;z-index:5;left:442.98px;transform-origin:100% 50%;">5</div><div style="position:absolute;top:463.70px;font:normal 13.35px 'Liberation Sans', sans-serif;line-height:13.35px;color:#000;white-space:pre;z-index:5;left:454.80px;transform-origin:0 50%;transform:scaleX(1.0411);">Shipped</div><div style="position:absolute;top:463.70px;font:normal 13.35px 'Liberation Sans', sans-serif;line-height:13.35px;color:#000;white-space:pre;z-index:5;left:638.98px;transform-origin:100% 50%;">0</div><div style="position:absolute;top:463.70px;font:normal 13.35px 'Liberation Sans', sans-serif;line-height:13.35px;color:#000;white-space:pre;z-index:5;left:689.29px;transform-origin:100% 50%;transform:scaleX(0.9539);">29734</div><div style="position:absolute;top:463.70px;font:normal 13.35px 'Liberation Sans', sans-serif;line-height:13.35px;color:#000;white-space:pre;z-index:5;left:800.13px;transform-origin:100% 50%;transform:scaleX(0.9656);">282</div><div style="position:absolute;top:463.70px;font:normal 13.35px 'Liberation Sans', sans-serif;line-height:13.35px;color:#000;white-space:pre;z-index:5;left:888.98px;transform-origin:100% 50%;">6</div><div style="position:absolute;top:463.70px;font:normal 13.35px 'Liberation Sans', sans-serif;line-height:13.35px;color:#000;white-space:pre;z-index:5;left:900.80px;transform-origin:0 50%;transform:scaleX(0.9519);">Canada</div><div style="position:absolute;top:463.70px;font:normal 13.35px 'Liberation Sans', sans-serif;line-height:13.35px;color:#000;white-space:pre;z-index:5;left:1008.80px;transform-origin:0 50%;transform:scaleX(1.0609);">North America</div><div style="position:absolute;top:463.70px;font:normal 13.35px 'Liberation Sans', sans-serif;line-height:13.35px;color:#000;white-space:pre;z-index:5;left:1195.98px;transform-origin:100% 50%;">5</div><div style="position:absolute;top:463.70px;font:normal 13.35px 'Liberation Sans', sans-serif;line-height:13.35px;color:#000;white-space:pre;z-index:5;left:1207.80px;transform-origin:0 50%;transform:scaleX(0.9048);">CARGO TRANSPORT 5</div><div style="position:absolute;top:483.70px;font:normal 13.35px 'Liberation Sans', sans-serif;line-height:13.35px;color:#000;white-space:pre;z-index:5;left:102.56px;transform-origin:100% 50%;">28</div><div style="position:absolute;top:483.70px;font:normal 13.35px 'Liberation Sans', sans-serif;line-height:13.35px;color:#000;white-space:pre;z-index:5;left:136.29px;transform-origin:100% 50%;transform:scaleX(0.9701);">43661</div><div style="position:absolute;top:483.70px;font:normal 13.35px 'Liberation Sans', sans-serif;line-height:13.35px;color:#000;white-space:pre;z-index:5;left:188.03px;transform-origin:100% 50%;transform:scaleX(1.0450);">5/31/2011</div><div style="position:absolute;top:483.70px;font:normal 13.35px 'Liberation Sans', sans-serif;line-height:13.35px;color:#000;white-space:pre;z-index:5;left:261.03px;transform-origin:100% 50%;transform:scaleX(1.0552);">6/12/2011</div><div style="position:absolute;top:483.70px;font:normal 13.35px 'Liberation Sans', sans-serif;line-height:13.35px;color:#000;white-space:pre;z-index:5;left:341.45px;transform-origin:100% 50%;transform:scaleX(1.0696);">6/7/2011</div><div style="position:absolute;top:483.70px;font:normal 13.35px 'Liberation Sans', sans-serif;line-height:13.35px;color:#000;white-space:pre;z-index:5;left:442.98px;transform-origin:100% 50%;">5</div><div style="position:absolute;top:483.70px;font:normal 13.35px 'Liberation Sans', sans-serif;line-height:13.35px;color:#000;white-space:pre;z-index:5;left:454.80px;transform-origin:0 50%;transform:scaleX(1.0411);">Shipped</div><div style="position:absolute;top:483.70px;font:normal 13.35px 'Liberation Sans', sans-serif;line-height:13.35px;color:#000;white-space:pre;z-index:5;left:638.98px;transform-origin:100% 50%;">0</div><div style="position:absolute;top:483.70px;font:normal 13.35px 'Liberation Sans', sans-serif;line-height:13.35px;color:#000;white-space:pre;z-index:5;left:689.29px;transform-origin:100% 50%;transform:scaleX(0.9539);">29734</div><div style="position:absolute;top:483.70px;font:normal 13.35px 'Liberation Sans', sans-serif;line-height:13.35px;color:#000;white-space:pre;z-index:5;left:800.13px;transform-origin:100% 50%;transform:scaleX(0.9656);">282</div><div style="position:absolute;top:483.70px;font:normal 13.35px 'Liberation Sans', sans-serif;line-height:13.35px;color:#000;white-space:pre;z-index:5;left:888.98px;transform-origin:100% 50%;">6</div><div style="position:absolute;top:483.70px;font:normal 13.35px 'Liberation Sans', sans-serif;line-height:13.35px;color:#000;white-space:pre;z-index:5;left:900.80px;transform-origin:0 50%;transform:scaleX(0.9519);">Canada</div><div style="position:absolute;top:483.70px;font:normal 13.35px 'Liberation Sans', sans-serif;line-height:13.35px;color:#000;white-space:pre;z-index:5;left:1008.80px;transform-origin:0 50%;transform:scaleX(1.0609);">North America</div><div style="position:absolute;top:483.70px;font:normal 13.35px 'Liberation Sans', sans-serif;line-height:13.35px;color:#000;white-space:pre;z-index:5;left:1195.98px;transform-origin:100% 50%;">5</div><div style="position:absolute;top:483.70px;font:normal 13.35px 'Liberation Sans', sans-serif;line-height:13.35px;color:#000;white-space:pre;z-index:5;left:1207.80px;transform-origin:0 50%;transform:scaleX(0.9048);">CARGO TRANSPORT 5</div><div style="position:absolute;top:503.70px;font:normal 13.35px 'Liberation Sans', sans-serif;line-height:13.35px;color:#000;white-space:pre;z-index:5;left:102.56px;transform-origin:100% 50%;">29</div><div style="position:absolute;top:503.70px;font:normal 13.35px 'Liberation Sans', sans-serif;line-height:13.35px;color:#000;white-space:pre;z-index:5;left:136.29px;transform-origin:100% 50%;transform:scaleX(0.9701);">43661</div><div style="position:absolute;top:503.70px;font:normal 13.35px 'Liberation Sans', sans-serif;line-height:13.35px;color:#000;white-space:pre;z-index:5;left:188.03px;transform-origin:100% 50%;transform:scaleX(1.0450);">5/31/2011</div><div style="position:absolute;top:503.70px;font:normal 13.35px 'Liberation Sans', sans-serif;line-height:13.35px;color:#000;white-space:pre;z-index:5;left:261.03px;transform-origin:100% 50%;transform:scaleX(1.0552);">6/12/2011</div><div style="position:absolute;top:503.70px;font:normal 13.35px 'Liberation Sans', sans-serif;line-height:13.35px;color:#000;white-space:pre;z-index:5;left:341.45px;transform-origin:100% 50%;transform:scaleX(1.0696);">6/7/2011</div><div style="position:absolute;top:503.70px;font:normal 13.35px 'Liberation Sans', sans-serif;line-height:13.35px;color:#000;white-space:pre;z-index:5;left:442.98px;transform-origin:100% 50%;">5</div><div style="position:absolute;top:503.70px;font:normal 13.35px 'Liberation Sans', sans-serif;line-height:13.35px;color:#000;white-space:pre;z-index:5;left:454.80px;transform-origin:0 50%;transform:scaleX(1.0411);">Shipped</div><div style="position:absolute;top:503.70px;font:normal 13.35px 'Liberation Sans', sans-serif;line-height:13.35px;color:#000;white-space:pre;z-index:5;left:638.98px;transform-origin:100% 50%;">0</div><div style="position:absolute;top:503.70px;font:normal 13.35px 'Liberation Sans', sans-serif;line-height:13.35px;color:#000;white-space:pre;z-index:5;left:689.29px;transform-origin:100% 50%;transform:scaleX(0.9539);">29734</div><div style="position:absolute;top:503.70px;font:normal 13.35px 'Liberation Sans', sans-serif;line-height:13.35px;color:#000;white-space:pre;z-index:5;left:800.13px;transform-origin:100% 50%;transform:scaleX(0.9656);">282</div><div style="position:absolute;top:503.70px;font:normal 13.35px 'Liberation Sans', sans-serif;line-height:13.35px;color:#000;white-space:pre;z-index:5;left:888.98px;transform-origin:100% 50%;">6</div><div style="position:absolute;top:503.70px;font:normal 13.35px 'Liberation Sans', sans-serif;line-height:13.35px;color:#000;white-space:pre;z-index:5;left:900.80px;transform-origin:0 50%;transform:scaleX(0.9519);">Canada</div><div style="position:absolute;top:503.70px;font:normal 13.35px 'Liberation Sans', sans-serif;line-height:13.35px;color:#000;white-space:pre;z-index:5;left:1008.80px;transform-origin:0 50%;transform:scaleX(1.0609);">North America</div><div style="position:absolute;top:503.70px;font:normal 13.35px 'Liberation Sans', sans-serif;line-height:13.35px;color:#000;white-space:pre;z-index:5;left:1195.98px;transform-origin:100% 50%;">5</div><div style="position:absolute;top:503.70px;font:normal 13.35px 'Liberation Sans', sans-serif;line-height:13.35px;color:#000;white-space:pre;z-index:5;left:1207.80px;transform-origin:0 50%;transform:scaleX(0.9048);">CARGO TRANSPORT 5</div><div style="position:absolute;top:523.70px;font:normal 13.35px 'Liberation Sans', sans-serif;line-height:13.35px;color:#000;white-space:pre;z-index:5;left:102.56px;transform-origin:100% 50%;">30</div><div style="position:absolute;top:523.70px;font:normal 13.35px 'Liberation Sans', sans-serif;line-height:13.35px;color:#000;white-space:pre;z-index:5;left:136.29px;transform-origin:100% 50%;transform:scaleX(0.9701);">43662</div><div style="position:absolute;top:523.70px;font:normal 13.35px 'Liberation Sans', sans-serif;line-height:13.35px;color:#000;white-space:pre;z-index:5;left:188.03px;transform-origin:100% 50%;transform:scaleX(1.0450);">5/31/2011</div><div style="position:absolute;top:523.70px;font:normal 13.35px 'Liberation Sans', sans-serif;line-height:13.35px;color:#000;white-space:pre;z-index:5;left:261.03px;transform-origin:100% 50%;transform:scaleX(1.0552);">6/12/2011</div><div style="position:absolute;top:523.70px;font:normal 13.35px 'Liberation Sans', sans-serif;line-height:13.35px;color:#000;white-space:pre;z-index:5;left:341.45px;transform-origin:100% 50%;transform:scaleX(1.0696);">6/7/2011</div><div style="position:absolute;top:523.70px;font:normal 13.35px 'Liberation Sans', sans-serif;line-height:13.35px;color:#000;white-space:pre;z-index:5;left:442.98px;transform-origin:100% 50%;">3</div><div style="position:absolute;top:523.70px;font:normal 13.35px 'Liberation Sans', sans-serif;line-height:13.35px;color:#000;white-space:pre;z-index:5;left:454.80px;transform-origin:0 50%;transform:scaleX(1.0308);">Backordered</div><div style="position:absolute;top:523.70px;font:normal 13.35px 'Liberation Sans', sans-serif;line-height:13.35px;color:#000;white-space:pre;z-index:5;left:638.98px;transform-origin:100% 50%;">0</div><div style="position:absolute;top:523.70px;font:normal 13.35px 'Liberation Sans', sans-serif;line-height:13.35px;color:#000;white-space:pre;z-index:5;left:689.29px;transform-origin:100% 50%;transform:scaleX(0.9539);">29994</div><div style="position:absolute;top:523.70px;font:normal 13.35px 'Liberation Sans', sans-serif;line-height:13.35px;color:#000;white-space:pre;z-index:5;left:800.13px;transform-origin:100% 50%;transform:scaleX(0.9656);">282</div><div style="position:absolute;top:523.70px;font:normal 13.35px 'Liberation Sans', sans-serif;line-height:13.35px;color:#000;white-space:pre;z-index:5;left:888.98px;transform-origin:100% 50%;">6</div><div style="position:absolute;top:523.70px;font:normal 13.35px 'Liberation Sans', sans-serif;line-height:13.35px;color:#000;white-space:pre;z-index:5;left:900.80px;transform-origin:0 50%;transform:scaleX(0.9519);">Canada</div><div style="position:absolute;top:523.70px;font:normal 13.35px 'Liberation Sans', sans-serif;line-height:13.35px;color:#000;white-space:pre;z-index:5;left:1008.80px;transform-origin:0 50%;transform:scaleX(1.0609);">North America</div><div style="position:absolute;top:523.70px;font:normal 13.35px 'Liberation Sans', sans-serif;line-height:13.35px;color:#000;white-space:pre;z-index:5;left:1195.98px;transform-origin:100% 50%;">5</div><div style="position:absolute;top:523.70px;font:normal 13.35px 'Liberation Sans', sans-serif;line-height:13.35px;color:#000;white-space:pre;z-index:5;left:1207.80px;transform-origin:0 50%;transform:scaleX(0.9048);">CARGO TRANSPORT 5</div><div style="position:absolute;top:543.70px;font:normal 13.35px 'Liberation Sans', sans-serif;line-height:13.35px;color:#000;white-space:pre;z-index:5;left:102.56px;transform-origin:100% 50%;">31</div><div style="position:absolute;top:543.70px;font:normal 13.35px 'Liberation Sans', sans-serif;line-height:13.35px;color:#000;white-space:pre;z-index:5;left:136.29px;transform-origin:100% 50%;transform:scaleX(0.9701);">43662</div><div style="position:absolute;top:543.70px;font:normal 13.35px 'Liberation Sans', sans-serif;line-height:13.35px;color:#000;white-space:pre;z-index:5;left:188.03px;transform-origin:100% 50%;transform:scaleX(1.0450);">5/31/2011</div><div style="position:absolute;top:543.70px;font:normal 13.35px 'Liberation Sans', sans-serif;line-height:13.35px;color:#000;white-space:pre;z-index:5;left:261.03px;transform-origin:100% 50%;transform:scaleX(1.0552);">6/12/2011</div><div style="position:absolute;top:543.70px;font:normal 13.35px 'Liberation Sans', sans-serif;line-height:13.35px;color:#000;white-space:pre;z-index:5;left:341.45px;transform-origin:100% 50%;transform:scaleX(1.0696);">6/7/2011</div><div style="position:absolute;top:543.70px;font:normal 13.35px 'Liberation Sans', sans-serif;line-height:13.35px;color:#000;white-space:pre;z-index:5;left:442.98px;transform-origin:100% 50%;">3</div><div style="position:absolute;top:543.70px;font:normal 13.35px 'Liberation Sans', sans-serif;line-height:13.35px;color:#000;white-space:pre;z-index:5;left:454.80px;transform-origin:0 50%;transform:scaleX(1.0308);">Backordered</div><div style="position:absolute;top:543.70px;font:normal 13.35px 'Liberation Sans', sans-serif;line-height:13.35px;color:#000;white-space:pre;z-index:5;left:638.98px;transform-origin:100% 50%;">0</div><div style="position:absolute;top:543.70px;font:normal 13.35px 'Liberation Sans', sans-serif;line-height:13.35px;color:#000;white-space:pre;z-index:5;left:689.29px;transform-origin:100% 50%;transform:scaleX(0.9539);">29994</div><div style="position:absolute;top:543.70px;font:normal 13.35px 'Liberation Sans', sans-serif;line-height:13.35px;color:#000;white-space:pre;z-index:5;left:800.13px;transform-origin:100% 50%;transform:scaleX(0.9656);">282</div><div style="position:absolute;top:543.70px;font:normal 13.35px 'Liberation Sans', sans-serif;line-height:13.35px;color:#000;white-space:pre;z-index:5;left:888.98px;transform-origin:100% 50%;">6</div><div style="position:absolute;top:543.70px;font:normal 13.35px 'Liberation Sans', sans-serif;line-height:13.35px;color:#000;white-space:pre;z-index:5;left:900.80px;transform-origin:0 50%;transform:scaleX(0.9519);">Canada</div><div style="position:absolute;top:543.70px;font:normal 13.35px 'Liberation Sans', sans-serif;line-height:13.35px;color:#000;white-space:pre;z-index:5;left:1008.80px;transform-origin:0 50%;transform:scaleX(1.0609);">North America</div><div style="position:absolute;top:543.70px;font:normal 13.35px 'Liberation Sans', sans-serif;line-height:13.35px;color:#000;white-space:pre;z-index:5;left:1195.98px;transform-origin:100% 50%;">5</div><div style="position:absolute;top:543.70px;font:normal 13.35px 'Liberation Sans', sans-serif;line-height:13.35px;color:#000;white-space:pre;z-index:5;left:1207.80px;transform-origin:0 50%;transform:scaleX(0.9048);">CARGO TRANSPORT 5</div><div style="position:absolute;top:563.70px;font:normal 13.35px 'Liberation Sans', sans-serif;line-height:13.35px;color:#000;white-space:pre;z-index:5;left:102.56px;transform-origin:100% 50%;">32</div><div style="position:absolute;top:563.70px;font:normal 13.35px 'Liberation Sans', sans-serif;line-height:13.35px;color:#000;white-space:pre;z-index:5;left:136.29px;transform-origin:100% 50%;transform:scaleX(0.9701);">43662</div><div style="position:absolute;top:563.70px;font:normal 13.35px 'Liberation Sans', sans-serif;line-height:13.35px;color:#000;white-space:pre;z-index:5;left:188.03px;transform-origin:100% 50%;transform:scaleX(1.0450);">5/31/2011</div><div style="position:absolute;top:563.70px;font:normal 13.35px 'Liberation Sans', sans-serif;line-height:13.35px;color:#000;white-space:pre;z-index:5;left:261.03px;transform-origin:100% 50%;transform:scaleX(1.0552);">6/12/2011</div><div style="position:absolute;top:563.70px;font:normal 13.35px 'Liberation Sans', sans-serif;line-height:13.35px;color:#000;white-space:pre;z-index:5;left:341.45px;transform-origin:100% 50%;transform:scaleX(1.0696);">6/7/2011</div><div style="position:absolute;top:563.70px;font:normal 13.35px 'Liberation Sans', sans-serif;line-height:13.35px;color:#000;white-space:pre;z-index:5;left:442.98px;transform-origin:100% 50%;">3</div><div style="position:absolute;top:563.70px;font:normal 13.35px 'Liberation Sans', sans-serif;line-height:13.35px;color:#000;white-space:pre;z-index:5;left:454.80px;transform-origin:0 50%;transform:scaleX(1.0308);">Backordered</div><div style="position:absolute;top:563.70px;font:normal 13.35px 'Liberation Sans', sans-serif;line-height:13.35px;color:#000;white-space:pre;z-index:5;left:638.98px;transform-origin:100% 50%;">0</div><div style="position:absolute;top:563.70px;font:normal 13.35px 'Liberation Sans', sans-serif;line-height:13.35px;color:#000;white-space:pre;z-index:5;left:689.29px;transform-origin:100% 50%;transform:scaleX(0.9539);">29994</div><div style="position:absolute;top:563.70px;font:normal 13.35px 'Liberation Sans', sans-serif;line-height:13.35px;color:#000;white-space:pre;z-index:5;left:800.13px;transform-origin:100% 50%;transform:scaleX(0.9656);">282</div><div style="position:absolute;top:563.70px;font:normal 13.35px 'Liberation Sans', sans-serif;line-height:13.35px;color:#000;white-space:pre;z-index:5;left:888.98px;transform-origin:100% 50%;">6</div><div style="position:absolute;top:563.70px;font:normal 13.35px 'Liberation Sans', sans-serif;line-height:13.35px;color:#000;white-space:pre;z-index:5;left:900.80px;transform-origin:0 50%;transform:scaleX(0.9519);">Canada</div><div style="position:absolute;top:563.70px;font:normal 13.35px 'Liberation Sans', sans-serif;line-height:13.35px;color:#000;white-space:pre;z-index:5;left:1008.80px;transform-origin:0 50%;transform:scaleX(1.0609);">North America</div><div style="position:absolute;top:563.70px;font:normal 13.35px 'Liberation Sans', sans-serif;line-height:13.35px;color:#000;white-space:pre;z-index:5;left:1195.98px;transform-origin:100% 50%;">5</div><div style="position:absolute;top:563.70px;font:normal 13.35px 'Liberation Sans', sans-serif;line-height:13.35px;color:#000;white-space:pre;z-index:5;left:1207.80px;transform-origin:0 50%;transform:scaleX(0.9048);">CARGO TRANSPORT 5</div><div style="position:absolute;top:583.70px;font:normal 13.35px 'Liberation Sans', sans-serif;line-height:13.35px;color:#000;white-space:pre;z-index:5;left:102.56px;transform-origin:100% 50%;">33</div><div style="position:absolute;top:583.70px;font:normal 13.35px 'Liberation Sans', sans-serif;line-height:13.35px;color:#000;white-space:pre;z-index:5;left:136.29px;transform-origin:100% 50%;transform:scaleX(0.9701);">43662</div><div style="position:absolute;top:583.70px;font:normal 13.35px 'Liberation Sans', sans-serif;line-height:13.35px;color:#000;white-space:pre;z-index:5;left:188.03px;transform-origin:100% 50%;transform:scaleX(1.0450);">5/31/2011</div><div style="position:absolute;top:583.70px;font:normal 13.35px 'Liberation Sans', sans-serif;line-height:13.35px;color:#000;white-space:pre;z-index:5;left:261.03px;transform-origin:100% 50%;transform:scaleX(1.0552);">6/12/2011</div><div style="position:absolute;top:583.70px;font:normal 13.35px 'Liberation Sans', sans-serif;line-height:13.35px;color:#000;white-space:pre;z-index:5;left:341.45px;transform-origin:100% 50%;transform:scaleX(1.0696);">6/7/2011</div><div style="position:absolute;top:583.70px;font:normal 13.35px 'Liberation Sans', sans-serif;line-height:13.35px;color:#000;white-space:pre;z-index:5;left:442.98px;transform-origin:100% 50%;">3</div><div style="position:absolute;top:583.70px;font:normal 13.35px 'Liberation Sans', sans-serif;line-height:13.35px;color:#000;white-space:pre;z-index:5;left:454.80px;transform-origin:0 50%;transform:scaleX(1.0308);">Backordered</div><div style="position:absolute;top:583.70px;font:normal 13.35px 'Liberation Sans', sans-serif;line-height:13.35px;color:#000;white-space:pre;z-index:5;left:638.98px;transform-origin:100% 50%;">0</div><div style="position:absolute;top:583.70px;font:normal 13.35px 'Liberation Sans', sans-serif;line-height:13.35px;color:#000;white-space:pre;z-index:5;left:689.29px;transform-origin:100% 50%;transform:scaleX(0.9539);">29994</div><div style="position:absolute;top:583.70px;font:normal 13.35px 'Liberation Sans', sans-serif;line-height:13.35px;color:#000;white-space:pre;z-index:5;left:800.13px;transform-origin:100% 50%;transform:scaleX(0.9656);">282</div><div style="position:absolute;top:583.70px;font:normal 13.35px 'Liberation Sans', sans-serif;line-height:13.35px;color:#000;white-space:pre;z-index:5;left:888.98px;transform-origin:100% 50%;">6</div><div style="position:absolute;top:583.70px;font:normal 13.35px 'Liberation Sans', sans-serif;line-height:13.35px;color:#000;white-space:pre;z-index:5;left:900.80px;transform-origin:0 50%;transform:scaleX(0.9519);">Canada</div><div style="position:absolute;top:583.70px;font:normal 13.35px 'Liberation Sans', sans-serif;line-height:13.35px;color:#000;white-space:pre;z-index:5;left:1008.80px;transform-origin:0 50%;transform:scaleX(1.0609);">North America</div><div style="position:absolute;top:583.70px;font:normal 13.35px 'Liberation Sans', sans-serif;line-height:13.35px;color:#000;white-space:pre;z-index:5;left:1195.98px;transform-origin:100% 50%;">5</div><div style="position:absolute;top:583.70px;font:normal 13.35px 'Liberation Sans', sans-serif;line-height:13.35px;color:#000;white-space:pre;z-index:5;left:1207.80px;transform-origin:0 50%;transform:scaleX(0.9048);">CARGO TRANSPORT 5</div><div style="position:absolute;top:603.70px;font:normal 13.35px 'Liberation Sans', sans-serif;line-height:13.35px;color:#000;white-space:pre;z-index:5;left:102.56px;transform-origin:100% 50%;">34</div><div style="position:absolute;top:603.70px;font:normal 13.35px 'Liberation Sans', sans-serif;line-height:13.35px;color:#000;white-space:pre;z-index:5;left:136.29px;transform-origin:100% 50%;transform:scaleX(0.9701);">43662</div><div style="position:absolute;top:603.70px;font:normal 13.35px 'Liberation Sans', sans-serif;line-height:13.35px;color:#000;white-space:pre;z-index:5;left:188.03px;transform-origin:100% 50%;transform:scaleX(1.0450);">5/31/2011</div><div style="position:absolute;top:603.70px;font:normal 13.35px 'Liberation Sans', sans-serif;line-height:13.35px;color:#000;white-space:pre;z-index:5;left:261.03px;transform-origin:100% 50%;transform:scaleX(1.0552);">6/12/2011</div><div style="position:absolute;top:603.70px;font:normal 13.35px 'Liberation Sans', sans-serif;line-height:13.35px;color:#000;white-space:pre;z-index:5;left:341.45px;transform-origin:100% 50%;transform:scaleX(1.0696);">6/7/2011</div><div style="position:absolute;top:603.70px;font:normal 13.35px 'Liberation Sans', sans-serif;line-height:13.35px;color:#000;white-space:pre;z-index:5;left:442.98px;transform-origin:100% 50%;">3</div><div style="position:absolute;top:603.70px;font:normal 13.35px 'Liberation Sans', sans-serif;line-height:13.35px;color:#000;white-space:pre;z-index:5;left:454.80px;transform-origin:0 50%;transform:scaleX(1.0308);">Backordered</div><div style="position:absolute;top:603.70px;font:normal 13.35px 'Liberation Sans', sans-serif;line-height:13.35px;color:#000;white-space:pre;z-index:5;left:638.98px;transform-origin:100% 50%;">0</div><div style="position:absolute;top:603.70px;font:normal 13.35px 'Liberation Sans', sans-serif;line-height:13.35px;color:#000;white-space:pre;z-index:5;left:689.29px;transform-origin:100% 50%;transform:scaleX(0.9539);">29994</div><div style="position:absolute;top:603.70px;font:normal 13.35px 'Liberation Sans', sans-serif;line-height:13.35px;color:#000;white-space:pre;z-index:5;left:800.13px;transform-origin:100% 50%;transform:scaleX(0.9656);">282</div><div style="position:absolute;top:603.70px;font:normal 13.35px 'Liberation Sans', sans-serif;line-height:13.35px;color:#000;white-space:pre;z-index:5;left:888.98px;transform-origin:100% 50%;">6</div><div style="position:absolute;top:603.70px;font:normal 13.35px 'Liberation Sans', sans-serif;line-height:13.35px;color:#000;white-space:pre;z-index:5;left:900.80px;transform-origin:0 50%;transform:scaleX(0.9519);">Canada</div><div style="position:absolute;top:603.70px;font:normal 13.35px 'Liberation Sans', sans-serif;line-height:13.35px;color:#000;white-space:pre;z-index:5;left:1008.80px;transform-origin:0 50%;transform:scaleX(1.0609);">North America</div><div style="position:absolute;top:603.70px;font:normal 13.35px 'Liberation Sans', sans-serif;line-height:13.35px;color:#000;white-space:pre;z-index:5;left:1195.98px;transform-origin:100% 50%;">5</div><div style="position:absolute;top:603.70px;font:normal 13.35px 'Liberation Sans', sans-serif;line-height:13.35px;color:#000;white-space:pre;z-index:5;left:1207.80px;transform-origin:0 50%;transform:scaleX(0.9048);">CARGO TRANSPORT 5</div><div style="position:absolute;top:623.70px;font:normal 13.35px 'Liberation Sans', sans-serif;line-height:13.35px;color:#000;white-space:pre;z-index:5;left:102.56px;transform-origin:100% 50%;">35</div><div style="position:absolute;top:623.70px;font:normal 13.35px 'Liberation Sans', sans-serif;line-height:13.35px;color:#000;white-space:pre;z-index:5;left:136.29px;transform-origin:100% 50%;transform:scaleX(0.9701);">43662</div><div style="position:absolute;top:623.70px;font:normal 13.35px 'Liberation Sans', sans-serif;line-height:13.35px;color:#000;white-space:pre;z-index:5;left:188.03px;transform-origin:100% 50%;transform:scaleX(1.0450);">5/31/2011</div><div style="position:absolute;top:623.70px;font:normal 13.35px 'Liberation Sans', sans-serif;line-height:13.35px;color:#000;white-space:pre;z-index:5;left:261.03px;transform-origin:100% 50%;transform:scaleX(1.0552);">6/12/2011</div><div style="position:absolute;top:623.70px;font:normal 13.35px 'Liberation Sans', sans-serif;line-height:13.35px;color:#000;white-space:pre;z-index:5;left:341.45px;transform-origin:100% 50%;transform:scaleX(1.0696);">6/7/2011</div><div style="position:absolute;top:623.70px;font:normal 13.35px 'Liberation Sans', sans-serif;line-height:13.35px;color:#000;white-space:pre;z-index:5;left:442.98px;transform-origin:100% 50%;">3</div><div style="position:absolute;top:623.70px;font:normal 13.35px 'Liberation Sans', sans-serif;line-height:13.35px;color:#000;white-space:pre;z-index:5;left:454.80px;transform-origin:0 50%;transform:scaleX(1.0308);">Backordered</div><div style="position:absolute;top:623.70px;font:normal 13.35px 'Liberation Sans', sans-serif;line-height:13.35px;color:#000;white-space:pre;z-index:5;left:638.98px;transform-origin:100% 50%;">0</div><div style="position:absolute;top:623.70px;font:normal 13.35px 'Liberation Sans', sans-serif;line-height:13.35px;color:#000;white-space:pre;z-index:5;left:689.29px;transform-origin:100% 50%;transform:scaleX(0.9539);">29994</div><div style="position:absolute;top:623.70px;font:normal 13.35px 'Liberation Sans', sans-serif;line-height:13.35px;color:#000;white-space:pre;z-index:5;left:800.13px;transform-origin:100% 50%;transform:scaleX(0.9656);">282</div><div style="position:absolute;top:623.70px;font:normal 13.35px 'Liberation Sans', sans-serif;line-height:13.35px;color:#000;white-space:pre;z-index:5;left:888.98px;transform-origin:100% 50%;">6</div><div style="position:absolute;top:623.70px;font:normal 13.35px 'Liberation Sans', sans-serif;line-height:13.35px;color:#000;white-space:pre;z-index:5;left:900.80px;transform-origin:0 50%;transform:scaleX(0.9519);">Canada</div><div style="position:absolute;top:623.70px;font:normal 13.35px 'Liberation Sans', sans-serif;line-height:13.35px;color:#000;white-space:pre;z-index:5;left:1008.80px;transform-origin:0 50%;transform:scaleX(1.0609);">North America</div><div style="position:absolute;top:623.70px;font:normal 13.35px 'Liberation Sans', sans-serif;line-height:13.35px;color:#000;white-space:pre;z-index:5;left:1195.98px;transform-origin:100% 50%;">5</div><div style="position:absolute;top:623.70px;font:normal 13.35px 'Liberation Sans', sans-serif;line-height:13.35px;color:#000;white-space:pre;z-index:5;left:1207.80px;transform-origin:0 50%;transform:scaleX(0.9048);">CARGO TRANSPORT 5</div><div style="position:absolute;top:643.70px;font:normal 13.35px 'Liberation Sans', sans-serif;line-height:13.35px;color:#000;white-space:pre;z-index:5;left:102.56px;transform-origin:100% 50%;">36</div><div style="position:absolute;top:643.70px;font:normal 13.35px 'Liberation Sans', sans-serif;line-height:13.35px;color:#000;white-space:pre;z-index:5;left:136.29px;transform-origin:100% 50%;transform:scaleX(0.9701);">43662</div><div style="position:absolute;top:643.70px;font:normal 13.35px 'Liberation Sans', sans-serif;line-height:13.35px;color:#000;white-space:pre;z-index:5;left:188.03px;transform-origin:100% 50%;transform:scaleX(1.0450);">5/31/2011</div><div style="position:absolute;top:643.70px;font:normal 13.35px 'Liberation Sans', sans-serif;line-height:13.35px;color:#000;white-space:pre;z-index:5;left:261.03px;transform-origin:100% 50%;transform:scaleX(1.0552);">6/12/2011</div><div style="position:absolute;top:643.70px;font:normal 13.35px 'Liberation Sans', sans-serif;line-height:13.35px;color:#000;white-space:pre;z-index:5;left:341.45px;transform-origin:100% 50%;transform:scaleX(1.0696);">6/7/2011</div><div style="position:absolute;top:643.70px;font:normal 13.35px 'Liberation Sans', sans-serif;line-height:13.35px;color:#000;white-space:pre;z-index:5;left:442.98px;transform-origin:100% 50%;">3</div><div style="position:absolute;top:643.70px;font:normal 13.35px 'Liberation Sans', sans-serif;line-height:13.35px;color:#000;white-space:pre;z-index:5;left:454.80px;transform-origin:0 50%;transform:scaleX(1.0308);">Backordered</div><div style="position:absolute;top:643.70px;font:normal 13.35px 'Liberation Sans', sans-serif;line-height:13.35px;color:#000;white-space:pre;z-index:5;left:638.98px;transform-origin:100% 50%;">0</div><div style="position:absolute;top:643.70px;font:normal 13.35px 'Liberation Sans', sans-serif;line-height:13.35px;color:#000;white-space:pre;z-index:5;left:689.29px;transform-origin:100% 50%;transform:scaleX(0.9539);">29994</div><div style="position:absolute;top:643.70px;font:normal 13.35px 'Liberation Sans', sans-serif;line-height:13.35px;color:#000;white-space:pre;z-index:5;left:800.13px;transform-origin:100% 50%;transform:scaleX(0.9656);">282</div><div style="position:absolute;top:643.70px;font:normal 13.35px 'Liberation Sans', sans-serif;line-height:13.35px;color:#000;white-space:pre;z-index:5;left:888.98px;transform-origin:100% 50%;">6</div><div style="position:absolute;top:643.70px;font:normal 13.35px 'Liberation Sans', sans-serif;line-height:13.35px;color:#000;white-space:pre;z-index:5;left:900.80px;transform-origin:0 50%;transform:scaleX(0.9519);">Canada</div><div style="position:absolute;top:643.70px;font:normal 13.35px 'Liberation Sans', sans-serif;line-height:13.35px;color:#000;white-space:pre;z-index:5;left:1008.80px;transform-origin:0 50%;transform:scaleX(1.0609);">North America</div><div style="position:absolute;top:643.70px;font:normal 13.35px 'Liberation Sans', sans-serif;line-height:13.35px;color:#000;white-space:pre;z-index:5;left:1195.98px;transform-origin:100% 50%;">5</div><div style="position:absolute;top:643.70px;font:normal 13.35px 'Liberation Sans', sans-serif;line-height:13.35px;color:#000;white-space:pre;z-index:5;left:1207.80px;transform-origin:0 50%;transform:scaleX(0.9048);">CARGO TRANSPORT 5</div><div style="position:absolute;top:663.70px;font:normal 13.35px 'Liberation Sans', sans-serif;line-height:13.35px;color:#000;white-space:pre;z-index:5;left:102.56px;transform-origin:100% 50%;">37</div><div style="position:absolute;top:663.70px;font:normal 13.35px 'Liberation Sans', sans-serif;line-height:13.35px;color:#000;white-space:pre;z-index:5;left:136.29px;transform-origin:100% 50%;transform:scaleX(0.9701);">43662</div><div style="position:absolute;top:663.70px;font:normal 13.35px 'Liberation Sans', sans-serif;line-height:13.35px;color:#000;white-space:pre;z-index:5;left:188.03px;transform-origin:100% 50%;transform:scaleX(1.0450);">5/31/2011</div><div style="position:absolute;top:663.70px;font:normal 13.35px 'Liberation Sans', sans-serif;line-height:13.35px;color:#000;white-space:pre;z-index:5;left:261.03px;transform-origin:100% 50%;transform:scaleX(1.0552);">6/12/2011</div><div style="position:absolute;top:663.70px;font:normal 13.35px 'Liberation Sans', sans-serif;line-height:13.35px;color:#000;white-space:pre;z-index:5;left:341.45px;transform-origin:100% 50%;transform:scaleX(1.0696);">6/7/2011</div><div style="position:absolute;top:663.70px;font:normal 13.35px 'Liberation Sans', sans-serif;line-height:13.35px;color:#000;white-space:pre;z-index:5;left:442.98px;transform-origin:100% 50%;">3</div><div style="position:absolute;top:663.70px;font:normal 13.35px 'Liberation Sans', sans-serif;line-height:13.35px;color:#000;white-space:pre;z-index:5;left:454.80px;transform-origin:0 50%;transform:scaleX(1.0308);">Backordered</div><div style="position:absolute;top:663.70px;font:normal 13.35px 'Liberation Sans', sans-serif;line-height:13.35px;color:#000;white-space:pre;z-index:5;left:638.98px;transform-origin:100% 50%;">0</div><div style="position:absolute;top:663.70px;font:normal 13.35px 'Liberation Sans', sans-serif;line-height:13.35px;color:#000;white-space:pre;z-index:5;left:689.29px;transform-origin:100% 50%;transform:scaleX(0.9539);">29994</div><div style="position:absolute;top:663.70px;font:normal 13.35px 'Liberation Sans', sans-serif;line-height:13.35px;color:#000;white-space:pre;z-index:5;left:800.13px;transform-origin:100% 50%;transform:scaleX(0.9656);">282</div><div style="position:absolute;top:663.70px;font:normal 13.35px 'Liberation Sans', sans-serif;line-height:13.35px;color:#000;white-space:pre;z-index:5;left:888.98px;transform-origin:100% 50%;">6</div><div style="position:absolute;top:663.70px;font:normal 13.35px 'Liberation Sans', sans-serif;line-height:13.35px;color:#000;white-space:pre;z-index:5;left:900.80px;transform-origin:0 50%;transform:scaleX(0.9519);">Canada</div><div style="position:absolute;top:663.70px;font:normal 13.35px 'Liberation Sans', sans-serif;line-height:13.35px;color:#000;white-space:pre;z-index:5;left:1008.80px;transform-origin:0 50%;transform:scaleX(1.0609);">North America</div><div style="position:absolute;top:663.70px;font:normal 13.35px 'Liberation Sans', sans-serif;line-height:13.35px;color:#000;white-space:pre;z-index:5;left:1195.98px;transform-origin:100% 50%;">5</div><div style="position:absolute;top:663.70px;font:normal 13.35px 'Liberation Sans', sans-serif;line-height:13.35px;color:#000;white-space:pre;z-index:5;left:1207.80px;transform-origin:0 50%;transform:scaleX(0.9048);">CARGO TRANSPORT 5</div><div style="position:absolute;top:683.70px;font:normal 13.35px 'Liberation Sans', sans-serif;line-height:13.35px;color:#000;white-space:pre;z-index:5;left:102.56px;transform-origin:100% 50%;">38</div><div style="position:absolute;top:683.70px;font:normal 13.35px 'Liberation Sans', sans-serif;line-height:13.35px;color:#000;white-space:pre;z-index:5;left:136.29px;transform-origin:100% 50%;transform:scaleX(0.9701);">43662</div><div style="position:absolute;top:683.70px;font:normal 13.35px 'Liberation Sans', sans-serif;line-height:13.35px;color:#000;white-space:pre;z-index:5;left:188.03px;transform-origin:100% 50%;transform:scaleX(1.0450);">5/31/2011</div><div style="position:absolute;top:683.70px;font:normal 13.35px 'Liberation Sans', sans-serif;line-height:13.35px;color:#000;white-space:pre;z-index:5;left:261.03px;transform-origin:100% 50%;transform:scaleX(1.0552);">6/12/2011</div><div style="position:absolute;top:683.70px;font:normal 13.35px 'Liberation Sans', sans-serif;line-height:13.35px;color:#000;white-space:pre;z-index:5;left:341.45px;transform-origin:100% 50%;transform:scaleX(1.0696);">6/7/2011</div><div style="position:absolute;top:683.70px;font:normal 13.35px 'Liberation Sans', sans-serif;line-height:13.35px;color:#000;white-space:pre;z-index:5;left:442.98px;transform-origin:100% 50%;">3</div><div style="position:absolute;top:683.70px;font:normal 13.35px 'Liberation Sans', sans-serif;line-height:13.35px;color:#000;white-space:pre;z-index:5;left:454.80px;transform-origin:0 50%;transform:scaleX(1.0308);">Backordered</div><div style="position:absolute;top:683.70px;font:normal 13.35px 'Liberation Sans', sans-serif;line-height:13.35px;color:#000;white-space:pre;z-index:5;left:638.98px;transform-origin:100% 50%;">0</div><div style="position:absolute;top:683.70px;font:normal 13.35px 'Liberation Sans', sans-serif;line-height:13.35px;color:#000;white-space:pre;z-index:5;left:689.29px;transform-origin:100% 50%;transform:scaleX(0.9539);">29994</div><div style="position:absolute;top:683.70px;font:normal 13.35px 'Liberation Sans', sans-serif;line-height:13.35px;color:#000;white-space:pre;z-index:5;left:800.13px;transform-origin:100% 50%;transform:scaleX(0.9656);">282</div><div style="position:absolute;top:683.70px;font:normal 13.35px 'Liberation Sans', sans-serif;line-height:13.35px;color:#000;white-space:pre;z-index:5;left:888.98px;transform-origin:100% 50%;">6</div><div style="position:absolute;top:683.70px;font:normal 13.35px 'Liberation Sans', sans-serif;line-height:13.35px;color:#000;white-space:pre;z-index:5;left:900.80px;transform-origin:0 50%;transform:scaleX(0.9519);">Canada</div><div style="position:absolute;top:683.70px;font:normal 13.35px 'Liberation Sans', sans-serif;line-height:13.35px;color:#000;white-space:pre;z-index:5;left:1008.80px;transform-origin:0 50%;transform:scaleX(1.0609);">North America</div><div style="position:absolute;top:683.70px;font:normal 13.35px 'Liberation Sans', sans-serif;line-height:13.35px;color:#000;white-space:pre;z-index:5;left:1195.98px;transform-origin:100% 50%;">5</div><div style="position:absolute;top:683.70px;font:normal 13.35px 'Liberation Sans', sans-serif;line-height:13.35px;color:#000;white-space:pre;z-index:5;left:1207.80px;transform-origin:0 50%;transform:scaleX(0.9048);">CARGO TRANSPORT 5</div><div style="position:absolute;top:703.70px;font:normal 13.35px 'Liberation Sans', sans-serif;line-height:13.35px;color:#000;white-space:pre;z-index:5;left:102.56px;transform-origin:100% 50%;">39</div><div style="position:absolute;top:703.70px;font:normal 13.35px 'Liberation Sans', sans-serif;line-height:13.35px;color:#000;white-space:pre;z-index:5;left:136.29px;transform-origin:100% 50%;transform:scaleX(0.9701);">43662</div><div style="position:absolute;top:703.70px;font:normal 13.35px 'Liberation Sans', sans-serif;line-height:13.35px;color:#000;white-space:pre;z-index:5;left:188.03px;transform-origin:100% 50%;transform:scaleX(1.0450);">5/31/2011</div><div style="position:absolute;top:703.70px;font:normal 13.35px 'Liberation Sans', sans-serif;line-height:13.35px;color:#000;white-space:pre;z-index:5;left:261.03px;transform-origin:100% 50%;transform:scaleX(1.0552);">6/12/2011</div><div style="position:absolute;top:703.70px;font:normal 13.35px 'Liberation Sans', sans-serif;line-height:13.35px;color:#000;white-space:pre;z-index:5;left:341.45px;transform-origin:100% 50%;transform:scaleX(1.0696);">6/7/2011</div><div style="position:absolute;top:703.70px;font:normal 13.35px 'Liberation Sans', sans-serif;line-height:13.35px;color:#000;white-space:pre;z-index:5;left:442.98px;transform-origin:100% 50%;">3</div><div style="position:absolute;top:703.70px;font:normal 13.35px 'Liberation Sans', sans-serif;line-height:13.35px;color:#000;white-space:pre;z-index:5;left:454.80px;transform-origin:0 50%;transform:scaleX(1.0308);">Backordered</div><div style="position:absolute;top:703.70px;font:normal 13.35px 'Liberation Sans', sans-serif;line-height:13.35px;color:#000;white-space:pre;z-index:5;left:638.98px;transform-origin:100% 50%;">0</div><div style="position:absolute;top:703.70px;font:normal 13.35px 'Liberation Sans', sans-serif;line-height:13.35px;color:#000;white-space:pre;z-index:5;left:689.29px;transform-origin:100% 50%;transform:scaleX(0.9539);">29994</div><div style="position:absolute;top:703.70px;font:normal 13.35px 'Liberation Sans', sans-serif;line-height:13.35px;color:#000;white-space:pre;z-index:5;left:800.13px;transform-origin:100% 50%;transform:scaleX(0.9656);">282</div><div style="position:absolute;top:703.70px;font:normal 13.35px 'Liberation Sans', sans-serif;line-height:13.35px;color:#000;white-space:pre;z-index:5;left:888.98px;transform-origin:100% 50%;">6</div><div style="position:absolute;top:703.70px;font:normal 13.35px 'Liberation Sans', sans-serif;line-height:13.35px;color:#000;white-space:pre;z-index:5;left:900.80px;transform-origin:0 50%;transform:scaleX(0.9519);">Canada</div><div style="position:absolute;top:703.70px;font:normal 13.35px 'Liberation Sans', sans-serif;line-height:13.35px;color:#000;white-space:pre;z-index:5;left:1008.80px;transform-origin:0 50%;transform:scaleX(1.0609);">North America</div><div style="position:absolute;top:703.70px;font:normal 13.35px 'Liberation Sans', sans-serif;line-height:13.35px;color:#000;white-space:pre;z-index:5;left:1195.98px;transform-origin:100% 50%;">5</div><div style="position:absolute;top:703.70px;font:normal 13.35px 'Liberation Sans', sans-serif;line-height:13.35px;color:#000;white-space:pre;z-index:5;left:1207.80px;transform-origin:0 50%;transform:scaleX(0.9048);">CARGO TRANSPORT 5</div><div style="position:absolute;top:723.50px;font:bold 13.35px 'Liberation Sans', sans-serif;line-height:13.35px;color:#217346;white-space:pre;z-index:6;left:111.60px;transform-origin:0 50%;transform:scaleX(0.9118);">Sales</div><div style="position:absolute;top:750.62px;font:normal 12.5px 'Liberation Sans', sans-serif;line-height:12.5px;color:#444444;white-space:pre;z-index:5;left:6.70px;transform-origin:0 50%;transform:scaleX(0.8771);">Ready</div><div style="position:absolute;top:750.34px;font:normal 12px 'Liberation Sans', sans-serif;line-height:12px;color:#444444;white-space:pre;z-index:5;left:1331.10px;transform-origin:0 50%;transform:scaleX(0.8892);">100%</div><div style="position:absolute;top:721.11px;font:bold 30px 'Liberation Sans', sans-serif;line-height:30px;color:rgba(0,0,0,0.10);white-space:pre;z-index:8;left:600.40px;transform-origin:0 50%;transform:scaleX(0.8863);">mostaql.com</div>
</body></html>
